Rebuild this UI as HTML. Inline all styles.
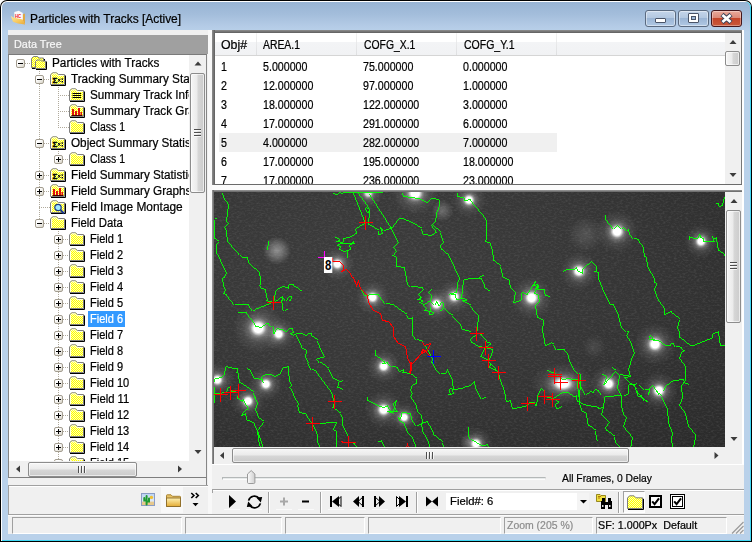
<!DOCTYPE html>
<html><head><meta charset="utf-8"><title>Particles with Tracks [Active]</title>
<style>
html,body{margin:0;padding:0;background:#fff;}
body{width:752px;height:542px;overflow:hidden;position:relative;font-family:"Liberation Sans",sans-serif;}
#win{position:absolute;left:0;top:0;width:752px;height:542px;overflow:hidden;}
.b{position:absolute;box-sizing:border-box;}
.t{position:absolute;white-space:pre;transform-origin:0 50%;display:block;-webkit-text-stroke:0.22px currentColor;}
svg{position:absolute;overflow:visible;}
.clip{position:absolute;overflow:hidden;}
</style></head><body><div id="win">
<div class="b" style="left:0;top:0;width:752px;height:542px;background:#000;border-radius:7px 7px 0 0;"></div>
<div class="b" style="left:1px;top:1px;width:750px;height:540px;background:#fff;border-radius:6px 6px 0 0;"></div>
<div class="b" style="left:300px;top:2px;width:451px;height:539px;background:#3fd8f4;border-radius:0 5px 0 0;"></div>
<div class="b" style="left:2px;top:300px;width:749px;height:241px;background:#3fd8f4;"></div>
<div class="b" style="left:2px;top:2px;width:748px;height:538px;border-radius:5px 5px 0 0;background:linear-gradient(#98b4d4 0px,#a3bddb 12px,#b4cbe6 24px,#b9d1ea 30px,#b9d1ea 100%);"></div>
<div class="b" style="left:8px;top:30px;width:736px;height:504px;background:#f0f0f0;"></div>
<svg style="left:10px;top:10px" width="18" height="16" viewBox="0 0 18 16">
<defs><linearGradient id="fg" x1="0" y1="0" x2="1" y2="1"><stop offset="0" stop-color="#ffe79a"/><stop offset="0.6" stop-color="#f6c65a"/><stop offset="1" stop-color="#e7a83c"/></linearGradient></defs>
<path d="M12.6 4.4 L14.9 3.6 L15 14.6 L12.4 10 Z" fill="#e3a73e"/>
<path d="M4.3 2 L8.8 0.8 L12.8 3 L12.8 11 L4.3 9 Z" fill="#fbfbfb"/>
<text x="4.9" y="7.6" font-family="Liberation Sans,sans-serif" font-weight="bold" font-size="4.9" fill="#f01818" textLength="6.2" lengthAdjust="spacingAndGlyphs">HC</text>
<path d="M0.8 6.1 L3.4 7.4 L12.6 9.6 L15 14.6 L8 13.6 L3 11.8 L1.9 9 Z" fill="url(#fg)"/>
</svg>
<span id="title" class="t" style="left:30px;top:10.5px;height:16px;line-height:16px;font-size:12px;color:#000;font-weight:normal;transform:scaleX(0.9934);">Particles with Tracks [Active]</span>
<div class="b" style="left:645px;top:10px;width:31px;height:17px;border:1px solid #5a6a80;border-radius:3px;background:linear-gradient(#c4d5ea 0%,#b3c8e1 45%,#9bb5d5 50%,#b0c8e4 100%);box-shadow:inset 0 0 0 1px rgba(255,255,255,.45);"></div>
<div class="b" style="left:655px;top:18px;width:11px;height:5px;background:#fff;border:1px solid #4a5468;border-radius:1px;"></div>
<div class="b" style="left:678px;top:10px;width:31px;height:17px;border:1px solid #5a6a80;border-radius:3px;background:linear-gradient(#c4d5ea 0%,#b3c8e1 45%,#9bb5d5 50%,#b0c8e4 100%);box-shadow:inset 0 0 0 1px rgba(255,255,255,.45);"></div>
<div class="b" style="left:688px;top:13px;width:11px;height:10px;background:#fff;border:1px solid #4a5468;border-radius:1px;"></div>
<div class="b" style="left:691px;top:16px;width:5px;height:4px;background:#9db7d6;border:1px solid #4a5468;"></div>
<div class="b" style="left:711px;top:10px;width:31px;height:17px;border:1px solid #43161c;border-radius:3px;background:linear-gradient(#e9a99b 0%,#dc8a79 45%,#c4452a 50%,#c8583a 100%);box-shadow:inset 0 0 0 1px rgba(255,255,255,.35);"></div>
<svg style="left:719px;top:12px" width="15" height="13" viewBox="0 0 15 13"><path d="M3 2.5 L12 10.5 M12 2.5 L3 10.5" stroke="#3f4458" stroke-width="4.6" stroke-linecap="butt" fill="none"/><path d="M3.4 2.9 L11.6 10.1 M11.6 2.9 L3.4 10.1" stroke="#fff" stroke-width="2.7" stroke-linecap="butt" fill="none"/></svg>
<div class="b" style="left:8px;top:35px;width:200px;height:19px;background:#a0a0a0;"></div>
<span id="datatree" class="t" style="left:13.6px;top:36.8px;height:15px;line-height:15px;font-size:11px;color:#f6f6f6;font-weight:normal;transform:scaleX(0.9875);">Data Tree</span>
<div class="b" style="left:8px;top:54px;width:199px;height:424px;background:#fff;border:1px solid #868686;border-top-color:#7a7a7a;border-bottom-color:#7e7e7e;"></div>
<div class="b" style="left:206px;top:478px;width:1px;height:37px;background:#868686;"></div>
<div class="b" style="left:189px;top:55px;width:17px;height:406px;background:#f0f0f0;"></div>
<svg style="left:0;top:0" width="752" height="542"><polygon points="194.5,65.5 198,61.5 201.5,65.5" fill="#3c3c3c"/></svg>
<svg style="left:0;top:0" width="752" height="542"><polygon points="194.5,450 198,454 201.5,450" fill="#3c3c3c"/></svg>
<div class="b" style="left:190px;top:73px;width:15px;height:120px;border:1px solid #8c8c8c;border-radius:2px;background:linear-gradient(90deg,#f6f6f6 0%,#ebebeb 45%,#d6d6d6 55%,#cbcbcb 100%);box-shadow:inset 0 0 0 1px rgba(255,255,255,.6);"></div>
<div class="b" style="left:194px;top:129px;width:7px;height:1px;background:#4f4f4f;"></div>
<div class="b" style="left:194px;top:130px;width:7px;height:1px;background:rgba(255,255,255,.75);"></div>
<div class="b" style="left:194px;top:132px;width:7px;height:1px;background:#4f4f4f;"></div>
<div class="b" style="left:194px;top:133px;width:7px;height:1px;background:rgba(255,255,255,.75);"></div>
<div class="b" style="left:194px;top:135px;width:7px;height:1px;background:#4f4f4f;"></div>
<div class="b" style="left:194px;top:136px;width:7px;height:1px;background:rgba(255,255,255,.75);"></div>
<div class="b" style="left:9px;top:461px;width:197px;height:16px;background:#f0f0f0;"></div>
<svg style="left:0;top:0" width="752" height="542"><polygon points="20,465.5 16,469 20,472.5" fill="#3c3c3c"/></svg>
<svg style="left:0;top:0" width="752" height="542"><polygon points="178,465.5 182,469 178,472.5" fill="#3c3c3c"/></svg>
<div class="b" style="left:28px;top:462px;width:109px;height:15px;border:1px solid #8c8c8c;border-radius:2px;background:linear-gradient(#f6f6f6 0%,#ebebeb 45%,#d6d6d6 55%,#cbcbcb 100%);box-shadow:inset 0 0 0 1px rgba(255,255,255,.6);"></div>
<div class="b" style="left:78px;top:466px;width:1px;height:7px;background:#4f4f4f;"></div>
<div class="b" style="left:79px;top:466px;width:1px;height:7px;background:rgba(255,255,255,.75);"></div>
<div class="b" style="left:81px;top:466px;width:1px;height:7px;background:#4f4f4f;"></div>
<div class="b" style="left:82px;top:466px;width:1px;height:7px;background:rgba(255,255,255,.75);"></div>
<div class="b" style="left:84px;top:466px;width:1px;height:7px;background:#4f4f4f;"></div>
<div class="b" style="left:85px;top:466px;width:1px;height:7px;background:rgba(255,255,255,.75);"></div>
<div class="clip" style="left:9px;top:55px;width:180px;height:406px;">
<svg width="0" height="0" style="left:0;top:0"><defs>
<pattern id="dith" width="2" height="2" patternUnits="userSpaceOnUse"><rect width="2" height="2" fill="#ffff00"/><rect x="0" y="0" width="1" height="1" fill="#ffffb4"/><rect x="1" y="1" width="1" height="1" fill="#ffffb4"/></pattern>
</defs></svg>
<div class="b" style="left:16px;top:8px;width:6px;height:1px;background:repeating-linear-gradient(90deg,#b0aa9c 0 1px,transparent 1px 2px);"></div>
<svg style="left:22px;top:1px" width="16" height="14" viewBox="0 0 16 14"><path d="M0.5 11.5 V2.5 L2.5 0.5 H6.5 L8 2 H12.5 V11.5 Z" fill="url(#dith)" stroke="#808080"/><path d="M1 12.5 H13.5 V3" fill="none" stroke="#000"/><path d="M4.5 12.5 V5.5 L6 4 H9.5 L10.5 5 H14.5 V12.5 Z" fill="url(#dith)" stroke="#808080"/><path d="M5 13.5 H15.5 V5.5" fill="none" stroke="#000"/></svg>
<div class="b" style="left:7px;top:4px;width:9px;height:9px;border:1px solid #a39d90;border-radius:2px;background:linear-gradient(135deg,#fff 30%,#d8d4c8 100%);"></div>
<div class="b" style="left:9px;top:8px;width:5px;height:1px;background:#000;"></div>
<span id="tree0" class="t" style="left:43px;top:0.0px;height:16px;line-height:16px;font-size:12px;color:#000;font-weight:normal;transform:scaleX(0.9817);">Particles with Tracks</span>
<div class="b" style="left:35px;top:24px;width:6px;height:1px;background:repeating-linear-gradient(90deg,#b0aa9c 0 1px,transparent 1px 2px);"></div>
<svg style="left:41px;top:17px" width="16" height="14" viewBox="0 0 16 14"><path d="M0.5 12.5 V3 L2.5 0.8 H6.5 L8.5 2.5 H14.5 V12.5 Z" fill="url(#dith)" stroke="#808080"/><path d="M1 13.5 H15.5 V3.5" fill="none" stroke="#000"/><path d="M1.5 12 V3.4 L2.9 1.8 H6.1 L8.1 3.5 H13.5" fill="none" stroke="#fff" stroke-opacity="0.85"/><text x="2.4" y="10.6" font-family="Liberation Sans,sans-serif" font-size="7.8" font-weight="bold" fill="#000" stroke="#000" stroke-width="0.45">Σ</text><path d="M8 6.8 L10.4 9.8 M10.400 6.8 L8 9.8" stroke="#000" stroke-width="1"/><rect x="11.6" y="6.4" width="1.4" height="1.4" fill="#000"/><rect x="11.6" y="9" width="1.4" height="1.4" fill="#000"/></svg>
<div class="b" style="left:26px;top:20px;width:9px;height:9px;border:1px solid #a39d90;border-radius:2px;background:linear-gradient(135deg,#fff 30%,#d8d4c8 100%);"></div>
<div class="b" style="left:28px;top:24px;width:5px;height:1px;background:#000;"></div>
<span id="tree1" class="t" style="left:62px;top:16.0px;height:16px;line-height:16px;font-size:12px;color:#000;font-weight:normal;transform:scaleX(0.9763);">Tracking Summary Statistics</span>
<div class="b" style="left:49px;top:40px;width:11px;height:1px;background:repeating-linear-gradient(90deg,#b0aa9c 0 1px,transparent 1px 2px);"></div>
<svg style="left:60px;top:33px" width="16" height="14" viewBox="0 0 16 14"><path d="M0.5 12.5 V3 L2.5 0.8 H6.5 L8.5 2.5 H14.5 V12.5 Z" fill="url(#dith)" stroke="#808080"/><path d="M1 13.5 H15.5 V3.5" fill="none" stroke="#000"/><path d="M1.5 12 V3.4 L2.9 1.8 H6.1 L8.1 3.5 H13.5" fill="none" stroke="#fff" stroke-opacity="0.85"/><path d="M3.5 5.5 H12 M3.5 7.5 H12 M3.5 9.5 H12" stroke="#000" stroke-width="1"/></svg>
<span id="tree2" class="t" style="left:81px;top:32.0px;height:16px;line-height:16px;font-size:12px;color:#000;font-weight:normal;transform:scaleX(0.9763);">Summary Track Info</span>
<div class="b" style="left:49px;top:56px;width:11px;height:1px;background:repeating-linear-gradient(90deg,#b0aa9c 0 1px,transparent 1px 2px);"></div>
<svg style="left:60px;top:49px" width="16" height="14" viewBox="0 0 16 14"><path d="M0.5 12.5 V3 L2.5 0.8 H6.5 L8.5 2.5 H14.5 V12.5 Z" fill="url(#dith)" stroke="#808080"/><path d="M1 13.5 H15.5 V3.5" fill="none" stroke="#000"/><path d="M1.5 12 V3.4 L2.9 1.8 H6.1 L8.1 3.5 H13.5" fill="none" stroke="#fff" stroke-opacity="0.85"/><rect x="3" y="5" width="2" height="6" fill="#e01010"/><rect x="6" y="7" width="2" height="4" fill="#e01010"/><rect x="9" y="4" width="2" height="7" fill="#e01010"/><rect x="11.5" y="8" width="1.5" height="3" fill="#e01010"/><path d="M2.5 11.5 H13.5" stroke="#400"/></svg>
<span id="tree3" class="t" style="left:81px;top:48.0px;height:16px;line-height:16px;font-size:12px;color:#000;font-weight:normal;transform:scaleX(0.9763);">Summary Track Graphs</span>
<div class="b" style="left:49px;top:72px;width:11px;height:1px;background:repeating-linear-gradient(90deg,#b0aa9c 0 1px,transparent 1px 2px);"></div>
<svg style="left:60px;top:65px" width="16" height="14" viewBox="0 0 16 14"><path d="M0.5 12.5 V3 L2.5 0.8 H6.5 L8.5 2.5 H14.5 V12.5 Z" fill="url(#dith)" stroke="#808080"/><path d="M1 13.5 H15.5 V3.5" fill="none" stroke="#000"/><path d="M1.5 12 V3.4 L2.9 1.8 H6.1 L8.1 3.5 H13.5" fill="none" stroke="#fff" stroke-opacity="0.85"/></svg>
<span id="tree4" class="t" style="left:81px;top:64.0px;height:16px;line-height:16px;font-size:12px;color:#000;font-weight:normal;transform:scaleX(0.8750);">Class 1</span>
<div class="b" style="left:35px;top:88px;width:6px;height:1px;background:repeating-linear-gradient(90deg,#b0aa9c 0 1px,transparent 1px 2px);"></div>
<svg style="left:41px;top:81px" width="16" height="14" viewBox="0 0 16 14"><path d="M0.5 12.5 V3 L2.5 0.8 H6.5 L8.5 2.5 H14.5 V12.5 Z" fill="url(#dith)" stroke="#808080"/><path d="M1 13.5 H15.5 V3.5" fill="none" stroke="#000"/><path d="M1.5 12 V3.4 L2.9 1.8 H6.1 L8.1 3.5 H13.5" fill="none" stroke="#fff" stroke-opacity="0.85"/><text x="2.4" y="10.6" font-family="Liberation Sans,sans-serif" font-size="7.8" font-weight="bold" fill="#000" stroke="#000" stroke-width="0.45">Σ</text><path d="M8 6.8 L10.4 9.8 M10.400 6.8 L8 9.8" stroke="#000" stroke-width="1"/><rect x="11.6" y="6.4" width="1.4" height="1.4" fill="#000"/><rect x="11.6" y="9" width="1.4" height="1.4" fill="#000"/></svg>
<div class="b" style="left:26px;top:84px;width:9px;height:9px;border:1px solid #a39d90;border-radius:2px;background:linear-gradient(135deg,#fff 30%,#d8d4c8 100%);"></div>
<div class="b" style="left:28px;top:88px;width:5px;height:1px;background:#000;"></div>
<span id="tree5" class="t" style="left:62px;top:80.0px;height:16px;line-height:16px;font-size:12px;color:#000;font-weight:normal;transform:scaleX(0.9763);">Object Summary Statistics</span>
<div class="b" style="left:54px;top:104px;width:6px;height:1px;background:repeating-linear-gradient(90deg,#b0aa9c 0 1px,transparent 1px 2px);"></div>
<svg style="left:60px;top:97px" width="16" height="14" viewBox="0 0 16 14"><path d="M0.5 12.5 V3 L2.5 0.8 H6.5 L8.5 2.5 H14.5 V12.5 Z" fill="url(#dith)" stroke="#808080"/><path d="M1 13.5 H15.5 V3.5" fill="none" stroke="#000"/><path d="M1.5 12 V3.4 L2.9 1.8 H6.1 L8.1 3.5 H13.5" fill="none" stroke="#fff" stroke-opacity="0.85"/></svg>
<div class="b" style="left:45px;top:100px;width:9px;height:9px;border:1px solid #a39d90;border-radius:2px;background:linear-gradient(135deg,#fff 30%,#d8d4c8 100%);"></div>
<div class="b" style="left:47px;top:104px;width:5px;height:1px;background:#000;"></div>
<div class="b" style="left:49px;top:102px;width:1px;height:5px;background:#000;"></div>
<span id="tree6" class="t" style="left:81px;top:96.0px;height:16px;line-height:16px;font-size:12px;color:#000;font-weight:normal;transform:scaleX(0.8750);">Class 1</span>
<div class="b" style="left:35px;top:120px;width:6px;height:1px;background:repeating-linear-gradient(90deg,#b0aa9c 0 1px,transparent 1px 2px);"></div>
<svg style="left:41px;top:113px" width="16" height="14" viewBox="0 0 16 14"><path d="M0.5 12.5 V3 L2.5 0.8 H6.5 L8.5 2.5 H14.5 V12.5 Z" fill="url(#dith)" stroke="#808080"/><path d="M1 13.5 H15.5 V3.5" fill="none" stroke="#000"/><path d="M1.5 12 V3.4 L2.9 1.8 H6.1 L8.1 3.5 H13.5" fill="none" stroke="#fff" stroke-opacity="0.85"/><text x="2.4" y="10.6" font-family="Liberation Sans,sans-serif" font-size="7.8" font-weight="bold" fill="#000" stroke="#000" stroke-width="0.45">Σ</text><path d="M8 6.8 L10.4 9.8 M10.400 6.8 L8 9.8" stroke="#000" stroke-width="1"/><rect x="11.6" y="6.4" width="1.4" height="1.4" fill="#000"/><rect x="11.6" y="9" width="1.4" height="1.4" fill="#000"/></svg>
<div class="b" style="left:26px;top:116px;width:9px;height:9px;border:1px solid #a39d90;border-radius:2px;background:linear-gradient(135deg,#fff 30%,#d8d4c8 100%);"></div>
<div class="b" style="left:28px;top:120px;width:5px;height:1px;background:#000;"></div>
<div class="b" style="left:30px;top:118px;width:1px;height:5px;background:#000;"></div>
<span id="tree7" class="t" style="left:62px;top:112.0px;height:16px;line-height:16px;font-size:12px;color:#000;font-weight:normal;transform:scaleX(0.9763);">Field Summary Statistics</span>
<div class="b" style="left:35px;top:136px;width:6px;height:1px;background:repeating-linear-gradient(90deg,#b0aa9c 0 1px,transparent 1px 2px);"></div>
<svg style="left:41px;top:129px" width="16" height="14" viewBox="0 0 16 14"><path d="M0.5 12.5 V3 L2.5 0.8 H6.5 L8.5 2.5 H14.5 V12.5 Z" fill="url(#dith)" stroke="#808080"/><path d="M1 13.5 H15.5 V3.5" fill="none" stroke="#000"/><path d="M1.5 12 V3.4 L2.9 1.8 H6.1 L8.1 3.5 H13.5" fill="none" stroke="#fff" stroke-opacity="0.85"/><rect x="3" y="5" width="2" height="6" fill="#e01010"/><rect x="6" y="7" width="2" height="4" fill="#e01010"/><rect x="9" y="4" width="2" height="7" fill="#e01010"/><rect x="11.5" y="8" width="1.5" height="3" fill="#e01010"/><path d="M2.5 11.5 H13.5" stroke="#400"/></svg>
<div class="b" style="left:26px;top:132px;width:9px;height:9px;border:1px solid #a39d90;border-radius:2px;background:linear-gradient(135deg,#fff 30%,#d8d4c8 100%);"></div>
<div class="b" style="left:28px;top:136px;width:5px;height:1px;background:#000;"></div>
<div class="b" style="left:30px;top:134px;width:1px;height:5px;background:#000;"></div>
<span id="tree8" class="t" style="left:62px;top:128.0px;height:16px;line-height:16px;font-size:12px;color:#000;font-weight:normal;transform:scaleX(0.9763);">Field Summary Graphs</span>
<div class="b" style="left:30px;top:152px;width:11px;height:1px;background:repeating-linear-gradient(90deg,#b0aa9c 0 1px,transparent 1px 2px);"></div>
<svg style="left:41px;top:145px" width="16" height="14" viewBox="0 0 16 14"><path d="M0.5 12.5 V3 L2.5 0.8 H6.5 L8.5 2.5 H14.5 V12.5 Z" fill="url(#dith)" stroke="#808080"/><path d="M1 13.5 H15.5 V3.5" fill="none" stroke="#000"/><path d="M1.5 12 V3.4 L2.9 1.8 H6.1 L8.1 3.5 H13.5" fill="none" stroke="#fff" stroke-opacity="0.85"/><circle cx="8" cy="7.5" r="3.2" fill="#9fe8ff" stroke="#1a3a8a" stroke-width="1.2"/><path d="M10.5 10 L14 13.5" stroke="#1a3a8a" stroke-width="2"/></svg>
<span id="tree9" class="t" style="left:62px;top:144.0px;height:16px;line-height:16px;font-size:12px;color:#000;font-weight:normal;transform:scaleX(0.9912);">Field Image Montage</span>
<div class="b" style="left:35px;top:168px;width:6px;height:1px;background:repeating-linear-gradient(90deg,#b0aa9c 0 1px,transparent 1px 2px);"></div>
<svg style="left:41px;top:161px" width="16" height="14" viewBox="0 0 16 14"><path d="M0.5 12.5 V3 L2.5 0.8 H6.5 L8.5 2.5 H14.5 V12.5 Z" fill="url(#dith)" stroke="#808080"/><path d="M1 13.5 H15.5 V3.5" fill="none" stroke="#000"/><path d="M1.5 12 V3.4 L2.9 1.8 H6.1 L8.1 3.5 H13.5" fill="none" stroke="#fff" stroke-opacity="0.85"/></svg>
<div class="b" style="left:26px;top:164px;width:9px;height:9px;border:1px solid #a39d90;border-radius:2px;background:linear-gradient(135deg,#fff 30%,#d8d4c8 100%);"></div>
<div class="b" style="left:28px;top:168px;width:5px;height:1px;background:#000;"></div>
<span id="tree10" class="t" style="left:62px;top:160.0px;height:16px;line-height:16px;font-size:12px;color:#000;font-weight:normal;transform:scaleX(0.9455);">Field Data</span>
<div class="b" style="left:54px;top:184px;width:6px;height:1px;background:repeating-linear-gradient(90deg,#b0aa9c 0 1px,transparent 1px 2px);"></div>
<svg style="left:60px;top:177px" width="16" height="14" viewBox="0 0 16 14"><path d="M0.5 12.5 V3 L2.5 0.8 H6.5 L8.5 2.5 H14.5 V12.5 Z" fill="url(#dith)" stroke="#808080"/><path d="M1 13.5 H15.5 V3.5" fill="none" stroke="#000"/><path d="M1.5 12 V3.4 L2.9 1.8 H6.1 L8.1 3.5 H13.5" fill="none" stroke="#fff" stroke-opacity="0.85"/></svg>
<div class="b" style="left:45px;top:180px;width:9px;height:9px;border:1px solid #a39d90;border-radius:2px;background:linear-gradient(135deg,#fff 30%,#d8d4c8 100%);"></div>
<div class="b" style="left:47px;top:184px;width:5px;height:1px;background:#000;"></div>
<div class="b" style="left:49px;top:182px;width:1px;height:5px;background:#000;"></div>
<span id="tree11" class="t" style="left:81px;top:176.0px;height:16px;line-height:16px;font-size:12px;color:#000;font-weight:normal;transform:scaleX(0.9167);">Field 1</span>
<div class="b" style="left:54px;top:200px;width:6px;height:1px;background:repeating-linear-gradient(90deg,#b0aa9c 0 1px,transparent 1px 2px);"></div>
<svg style="left:60px;top:193px" width="16" height="14" viewBox="0 0 16 14"><path d="M0.5 12.5 V3 L2.5 0.8 H6.5 L8.5 2.5 H14.5 V12.5 Z" fill="url(#dith)" stroke="#808080"/><path d="M1 13.5 H15.5 V3.5" fill="none" stroke="#000"/><path d="M1.5 12 V3.4 L2.9 1.8 H6.1 L8.1 3.5 H13.5" fill="none" stroke="#fff" stroke-opacity="0.85"/></svg>
<div class="b" style="left:45px;top:196px;width:9px;height:9px;border:1px solid #a39d90;border-radius:2px;background:linear-gradient(135deg,#fff 30%,#d8d4c8 100%);"></div>
<div class="b" style="left:47px;top:200px;width:5px;height:1px;background:#000;"></div>
<div class="b" style="left:49px;top:198px;width:1px;height:5px;background:#000;"></div>
<span id="tree12" class="t" style="left:81px;top:192.0px;height:16px;line-height:16px;font-size:12px;color:#000;font-weight:normal;transform:scaleX(0.9167);">Field 2</span>
<div class="b" style="left:54px;top:216px;width:6px;height:1px;background:repeating-linear-gradient(90deg,#b0aa9c 0 1px,transparent 1px 2px);"></div>
<svg style="left:60px;top:209px" width="16" height="14" viewBox="0 0 16 14"><path d="M0.5 12.5 V3 L2.5 0.8 H6.5 L8.5 2.5 H14.5 V12.5 Z" fill="url(#dith)" stroke="#808080"/><path d="M1 13.5 H15.5 V3.5" fill="none" stroke="#000"/><path d="M1.5 12 V3.4 L2.9 1.8 H6.1 L8.1 3.5 H13.5" fill="none" stroke="#fff" stroke-opacity="0.85"/></svg>
<div class="b" style="left:45px;top:212px;width:9px;height:9px;border:1px solid #a39d90;border-radius:2px;background:linear-gradient(135deg,#fff 30%,#d8d4c8 100%);"></div>
<div class="b" style="left:47px;top:216px;width:5px;height:1px;background:#000;"></div>
<div class="b" style="left:49px;top:214px;width:1px;height:5px;background:#000;"></div>
<span id="tree13" class="t" style="left:81px;top:208.0px;height:16px;line-height:16px;font-size:12px;color:#000;font-weight:normal;transform:scaleX(0.9167);">Field 3</span>
<div class="b" style="left:54px;top:232px;width:6px;height:1px;background:repeating-linear-gradient(90deg,#b0aa9c 0 1px,transparent 1px 2px);"></div>
<svg style="left:60px;top:225px" width="16" height="14" viewBox="0 0 16 14"><path d="M0.5 12.5 V3 L2.5 0.8 H6.5 L8.5 2.5 H14.5 V12.5 Z" fill="url(#dith)" stroke="#808080"/><path d="M1 13.5 H15.5 V3.5" fill="none" stroke="#000"/><path d="M1.5 12 V3.4 L2.9 1.8 H6.1 L8.1 3.5 H13.5" fill="none" stroke="#fff" stroke-opacity="0.85"/></svg>
<div class="b" style="left:45px;top:228px;width:9px;height:9px;border:1px solid #a39d90;border-radius:2px;background:linear-gradient(135deg,#fff 30%,#d8d4c8 100%);"></div>
<div class="b" style="left:47px;top:232px;width:5px;height:1px;background:#000;"></div>
<div class="b" style="left:49px;top:230px;width:1px;height:5px;background:#000;"></div>
<span id="tree14" class="t" style="left:81px;top:224.0px;height:16px;line-height:16px;font-size:12px;color:#000;font-weight:normal;transform:scaleX(0.9167);">Field 4</span>
<div class="b" style="left:54px;top:248px;width:6px;height:1px;background:repeating-linear-gradient(90deg,#b0aa9c 0 1px,transparent 1px 2px);"></div>
<svg style="left:60px;top:241px" width="16" height="14" viewBox="0 0 16 14"><path d="M0.5 12.5 V3 L2.5 0.8 H6.5 L8.5 2.5 H14.5 V12.5 Z" fill="url(#dith)" stroke="#808080"/><path d="M1 13.5 H15.5 V3.5" fill="none" stroke="#000"/><path d="M1.5 12 V3.4 L2.9 1.8 H6.1 L8.1 3.5 H13.5" fill="none" stroke="#fff" stroke-opacity="0.85"/></svg>
<div class="b" style="left:45px;top:244px;width:9px;height:9px;border:1px solid #a39d90;border-radius:2px;background:linear-gradient(135deg,#fff 30%,#d8d4c8 100%);"></div>
<div class="b" style="left:47px;top:248px;width:5px;height:1px;background:#000;"></div>
<div class="b" style="left:49px;top:246px;width:1px;height:5px;background:#000;"></div>
<span id="tree15" class="t" style="left:81px;top:240.0px;height:16px;line-height:16px;font-size:12px;color:#000;font-weight:normal;transform:scaleX(0.9167);">Field 5</span>
<div class="b" style="left:54px;top:264px;width:6px;height:1px;background:repeating-linear-gradient(90deg,#b0aa9c 0 1px,transparent 1px 2px);"></div>
<div class="b" style="left:79px;top:256px;width:37px;height:16px;background:#3399ff;"></div>
<svg style="left:60px;top:257px" width="16" height="14" viewBox="0 0 16 14"><path d="M0.5 12.5 V3 L2.5 0.8 H6.5 L8.5 2.5 H14.5 V12.5 Z" fill="url(#dith)" stroke="#808080"/><path d="M1 13.5 H15.5 V3.5" fill="none" stroke="#000"/><path d="M1.5 12 V3.4 L2.9 1.8 H6.1 L8.1 3.5 H13.5" fill="none" stroke="#fff" stroke-opacity="0.85"/></svg>
<div class="b" style="left:45px;top:260px;width:9px;height:9px;border:1px solid #a39d90;border-radius:2px;background:linear-gradient(135deg,#fff 30%,#d8d4c8 100%);"></div>
<div class="b" style="left:47px;top:264px;width:5px;height:1px;background:#000;"></div>
<div class="b" style="left:49px;top:262px;width:1px;height:5px;background:#000;"></div>
<span id="tree16" class="t" style="left:81px;top:256.0px;height:16px;line-height:16px;font-size:12px;color:#fff;font-weight:normal;transform:scaleX(0.9167);">Field 6</span>
<div class="b" style="left:54px;top:280px;width:6px;height:1px;background:repeating-linear-gradient(90deg,#b0aa9c 0 1px,transparent 1px 2px);"></div>
<svg style="left:60px;top:273px" width="16" height="14" viewBox="0 0 16 14"><path d="M0.5 12.5 V3 L2.5 0.8 H6.5 L8.5 2.5 H14.5 V12.5 Z" fill="url(#dith)" stroke="#808080"/><path d="M1 13.5 H15.5 V3.5" fill="none" stroke="#000"/><path d="M1.5 12 V3.4 L2.9 1.8 H6.1 L8.1 3.5 H13.5" fill="none" stroke="#fff" stroke-opacity="0.85"/></svg>
<div class="b" style="left:45px;top:276px;width:9px;height:9px;border:1px solid #a39d90;border-radius:2px;background:linear-gradient(135deg,#fff 30%,#d8d4c8 100%);"></div>
<div class="b" style="left:47px;top:280px;width:5px;height:1px;background:#000;"></div>
<div class="b" style="left:49px;top:278px;width:1px;height:5px;background:#000;"></div>
<span id="tree17" class="t" style="left:81px;top:272.0px;height:16px;line-height:16px;font-size:12px;color:#000;font-weight:normal;transform:scaleX(0.9167);">Field 7</span>
<div class="b" style="left:54px;top:296px;width:6px;height:1px;background:repeating-linear-gradient(90deg,#b0aa9c 0 1px,transparent 1px 2px);"></div>
<svg style="left:60px;top:289px" width="16" height="14" viewBox="0 0 16 14"><path d="M0.5 12.5 V3 L2.5 0.8 H6.5 L8.5 2.5 H14.5 V12.5 Z" fill="url(#dith)" stroke="#808080"/><path d="M1 13.5 H15.5 V3.5" fill="none" stroke="#000"/><path d="M1.5 12 V3.4 L2.9 1.8 H6.1 L8.1 3.5 H13.5" fill="none" stroke="#fff" stroke-opacity="0.85"/></svg>
<div class="b" style="left:45px;top:292px;width:9px;height:9px;border:1px solid #a39d90;border-radius:2px;background:linear-gradient(135deg,#fff 30%,#d8d4c8 100%);"></div>
<div class="b" style="left:47px;top:296px;width:5px;height:1px;background:#000;"></div>
<div class="b" style="left:49px;top:294px;width:1px;height:5px;background:#000;"></div>
<span id="tree18" class="t" style="left:81px;top:288.0px;height:16px;line-height:16px;font-size:12px;color:#000;font-weight:normal;transform:scaleX(0.9167);">Field 8</span>
<div class="b" style="left:54px;top:312px;width:6px;height:1px;background:repeating-linear-gradient(90deg,#b0aa9c 0 1px,transparent 1px 2px);"></div>
<svg style="left:60px;top:305px" width="16" height="14" viewBox="0 0 16 14"><path d="M0.5 12.5 V3 L2.5 0.8 H6.5 L8.5 2.5 H14.5 V12.5 Z" fill="url(#dith)" stroke="#808080"/><path d="M1 13.5 H15.5 V3.5" fill="none" stroke="#000"/><path d="M1.5 12 V3.4 L2.9 1.8 H6.1 L8.1 3.5 H13.5" fill="none" stroke="#fff" stroke-opacity="0.85"/></svg>
<div class="b" style="left:45px;top:308px;width:9px;height:9px;border:1px solid #a39d90;border-radius:2px;background:linear-gradient(135deg,#fff 30%,#d8d4c8 100%);"></div>
<div class="b" style="left:47px;top:312px;width:5px;height:1px;background:#000;"></div>
<div class="b" style="left:49px;top:310px;width:1px;height:5px;background:#000;"></div>
<span id="tree19" class="t" style="left:81px;top:304.0px;height:16px;line-height:16px;font-size:12px;color:#000;font-weight:normal;transform:scaleX(0.9167);">Field 9</span>
<div class="b" style="left:54px;top:328px;width:6px;height:1px;background:repeating-linear-gradient(90deg,#b0aa9c 0 1px,transparent 1px 2px);"></div>
<svg style="left:60px;top:321px" width="16" height="14" viewBox="0 0 16 14"><path d="M0.5 12.5 V3 L2.5 0.8 H6.5 L8.5 2.5 H14.5 V12.5 Z" fill="url(#dith)" stroke="#808080"/><path d="M1 13.5 H15.5 V3.5" fill="none" stroke="#000"/><path d="M1.5 12 V3.4 L2.9 1.8 H6.1 L8.1 3.5 H13.5" fill="none" stroke="#fff" stroke-opacity="0.85"/></svg>
<div class="b" style="left:45px;top:324px;width:9px;height:9px;border:1px solid #a39d90;border-radius:2px;background:linear-gradient(135deg,#fff 30%,#d8d4c8 100%);"></div>
<div class="b" style="left:47px;top:328px;width:5px;height:1px;background:#000;"></div>
<div class="b" style="left:49px;top:326px;width:1px;height:5px;background:#000;"></div>
<span id="tree20" class="t" style="left:81px;top:320.0px;height:16px;line-height:16px;font-size:12px;color:#000;font-weight:normal;transform:scaleX(0.9186);">Field 10</span>
<div class="b" style="left:54px;top:344px;width:6px;height:1px;background:repeating-linear-gradient(90deg,#b0aa9c 0 1px,transparent 1px 2px);"></div>
<svg style="left:60px;top:337px" width="16" height="14" viewBox="0 0 16 14"><path d="M0.5 12.5 V3 L2.5 0.8 H6.5 L8.5 2.5 H14.5 V12.5 Z" fill="url(#dith)" stroke="#808080"/><path d="M1 13.5 H15.5 V3.5" fill="none" stroke="#000"/><path d="M1.5 12 V3.4 L2.9 1.8 H6.1 L8.1 3.5 H13.5" fill="none" stroke="#fff" stroke-opacity="0.85"/></svg>
<div class="b" style="left:45px;top:340px;width:9px;height:9px;border:1px solid #a39d90;border-radius:2px;background:linear-gradient(135deg,#fff 30%,#d8d4c8 100%);"></div>
<div class="b" style="left:47px;top:344px;width:5px;height:1px;background:#000;"></div>
<div class="b" style="left:49px;top:342px;width:1px;height:5px;background:#000;"></div>
<span id="tree21" class="t" style="left:81px;top:336.0px;height:16px;line-height:16px;font-size:12px;color:#000;font-weight:normal;transform:scaleX(0.9405);">Field 11</span>
<div class="b" style="left:54px;top:360px;width:6px;height:1px;background:repeating-linear-gradient(90deg,#b0aa9c 0 1px,transparent 1px 2px);"></div>
<svg style="left:60px;top:353px" width="16" height="14" viewBox="0 0 16 14"><path d="M0.5 12.5 V3 L2.5 0.8 H6.5 L8.5 2.5 H14.5 V12.5 Z" fill="url(#dith)" stroke="#808080"/><path d="M1 13.5 H15.5 V3.5" fill="none" stroke="#000"/><path d="M1.5 12 V3.4 L2.9 1.8 H6.1 L8.1 3.5 H13.5" fill="none" stroke="#fff" stroke-opacity="0.85"/></svg>
<div class="b" style="left:45px;top:356px;width:9px;height:9px;border:1px solid #a39d90;border-radius:2px;background:linear-gradient(135deg,#fff 30%,#d8d4c8 100%);"></div>
<div class="b" style="left:47px;top:360px;width:5px;height:1px;background:#000;"></div>
<div class="b" style="left:49px;top:358px;width:1px;height:5px;background:#000;"></div>
<span id="tree22" class="t" style="left:81px;top:352.0px;height:16px;line-height:16px;font-size:12px;color:#000;font-weight:normal;transform:scaleX(0.9186);">Field 12</span>
<div class="b" style="left:54px;top:376px;width:6px;height:1px;background:repeating-linear-gradient(90deg,#b0aa9c 0 1px,transparent 1px 2px);"></div>
<svg style="left:60px;top:369px" width="16" height="14" viewBox="0 0 16 14"><path d="M0.5 12.5 V3 L2.5 0.8 H6.5 L8.5 2.5 H14.5 V12.5 Z" fill="url(#dith)" stroke="#808080"/><path d="M1 13.5 H15.5 V3.5" fill="none" stroke="#000"/><path d="M1.5 12 V3.4 L2.9 1.8 H6.1 L8.1 3.5 H13.5" fill="none" stroke="#fff" stroke-opacity="0.85"/></svg>
<div class="b" style="left:45px;top:372px;width:9px;height:9px;border:1px solid #a39d90;border-radius:2px;background:linear-gradient(135deg,#fff 30%,#d8d4c8 100%);"></div>
<div class="b" style="left:47px;top:376px;width:5px;height:1px;background:#000;"></div>
<div class="b" style="left:49px;top:374px;width:1px;height:5px;background:#000;"></div>
<span id="tree23" class="t" style="left:81px;top:368.0px;height:16px;line-height:16px;font-size:12px;color:#000;font-weight:normal;transform:scaleX(0.9186);">Field 13</span>
<div class="b" style="left:54px;top:392px;width:6px;height:1px;background:repeating-linear-gradient(90deg,#b0aa9c 0 1px,transparent 1px 2px);"></div>
<svg style="left:60px;top:385px" width="16" height="14" viewBox="0 0 16 14"><path d="M0.5 12.5 V3 L2.5 0.8 H6.5 L8.5 2.5 H14.5 V12.5 Z" fill="url(#dith)" stroke="#808080"/><path d="M1 13.5 H15.5 V3.5" fill="none" stroke="#000"/><path d="M1.5 12 V3.4 L2.9 1.8 H6.1 L8.1 3.5 H13.5" fill="none" stroke="#fff" stroke-opacity="0.85"/></svg>
<div class="b" style="left:45px;top:388px;width:9px;height:9px;border:1px solid #a39d90;border-radius:2px;background:linear-gradient(135deg,#fff 30%,#d8d4c8 100%);"></div>
<div class="b" style="left:47px;top:392px;width:5px;height:1px;background:#000;"></div>
<div class="b" style="left:49px;top:390px;width:1px;height:5px;background:#000;"></div>
<span id="tree24" class="t" style="left:81px;top:384.0px;height:16px;line-height:16px;font-size:12px;color:#000;font-weight:normal;transform:scaleX(0.9186);">Field 14</span>
<div class="b" style="left:54px;top:408px;width:6px;height:1px;background:repeating-linear-gradient(90deg,#b0aa9c 0 1px,transparent 1px 2px);"></div>
<svg style="left:60px;top:401px" width="16" height="14" viewBox="0 0 16 14"><path d="M0.5 12.5 V3 L2.5 0.8 H6.5 L8.5 2.5 H14.5 V12.5 Z" fill="url(#dith)" stroke="#808080"/><path d="M1 13.5 H15.5 V3.5" fill="none" stroke="#000"/><path d="M1.5 12 V3.4 L2.9 1.8 H6.1 L8.1 3.5 H13.5" fill="none" stroke="#fff" stroke-opacity="0.85"/></svg>
<div class="b" style="left:45px;top:404px;width:9px;height:9px;border:1px solid #a39d90;border-radius:2px;background:linear-gradient(135deg,#fff 30%,#d8d4c8 100%);"></div>
<div class="b" style="left:47px;top:408px;width:5px;height:1px;background:#000;"></div>
<div class="b" style="left:49px;top:406px;width:1px;height:5px;background:#000;"></div>
<span id="tree25" class="t" style="left:81px;top:400.0px;height:16px;line-height:16px;font-size:12px;color:#000;font-weight:normal;transform:scaleX(0.9186);">Field 15</span>
<div class="b" style="left:30px;top:16px;width:1px;height:4px;background:repeating-linear-gradient(#b0aa9c 0 1px,transparent 1px 2px);"></div>
<div class="b" style="left:30px;top:29px;width:1px;height:55px;background:repeating-linear-gradient(#b0aa9c 0 1px,transparent 1px 2px);"></div>
<div class="b" style="left:30px;top:93px;width:1px;height:23px;background:repeating-linear-gradient(#b0aa9c 0 1px,transparent 1px 2px);"></div>
<div class="b" style="left:30px;top:125px;width:1px;height:7px;background:repeating-linear-gradient(#b0aa9c 0 1px,transparent 1px 2px);"></div>
<div class="b" style="left:30px;top:141px;width:1px;height:23px;background:repeating-linear-gradient(#b0aa9c 0 1px,transparent 1px 2px);"></div>
<div class="b" style="left:49px;top:32px;width:1px;height:41px;background:repeating-linear-gradient(#b0aa9c 0 1px,transparent 1px 2px);"></div>
<div class="b" style="left:49px;top:96px;width:1px;height:4px;background:repeating-linear-gradient(#b0aa9c 0 1px,transparent 1px 2px);"></div>
<div class="b" style="left:49px;top:176px;width:1px;height:4px;background:repeating-linear-gradient(#b0aa9c 0 1px,transparent 1px 2px);"></div>
<div class="b" style="left:49px;top:189px;width:1px;height:7px;background:repeating-linear-gradient(#b0aa9c 0 1px,transparent 1px 2px);"></div>
<div class="b" style="left:49px;top:205px;width:1px;height:7px;background:repeating-linear-gradient(#b0aa9c 0 1px,transparent 1px 2px);"></div>
<div class="b" style="left:49px;top:221px;width:1px;height:7px;background:repeating-linear-gradient(#b0aa9c 0 1px,transparent 1px 2px);"></div>
<div class="b" style="left:49px;top:237px;width:1px;height:7px;background:repeating-linear-gradient(#b0aa9c 0 1px,transparent 1px 2px);"></div>
<div class="b" style="left:49px;top:253px;width:1px;height:7px;background:repeating-linear-gradient(#b0aa9c 0 1px,transparent 1px 2px);"></div>
<div class="b" style="left:49px;top:269px;width:1px;height:7px;background:repeating-linear-gradient(#b0aa9c 0 1px,transparent 1px 2px);"></div>
<div class="b" style="left:49px;top:285px;width:1px;height:7px;background:repeating-linear-gradient(#b0aa9c 0 1px,transparent 1px 2px);"></div>
<div class="b" style="left:49px;top:301px;width:1px;height:7px;background:repeating-linear-gradient(#b0aa9c 0 1px,transparent 1px 2px);"></div>
<div class="b" style="left:49px;top:317px;width:1px;height:7px;background:repeating-linear-gradient(#b0aa9c 0 1px,transparent 1px 2px);"></div>
<div class="b" style="left:49px;top:333px;width:1px;height:7px;background:repeating-linear-gradient(#b0aa9c 0 1px,transparent 1px 2px);"></div>
<div class="b" style="left:49px;top:349px;width:1px;height:7px;background:repeating-linear-gradient(#b0aa9c 0 1px,transparent 1px 2px);"></div>
<div class="b" style="left:49px;top:365px;width:1px;height:7px;background:repeating-linear-gradient(#b0aa9c 0 1px,transparent 1px 2px);"></div>
<div class="b" style="left:49px;top:381px;width:1px;height:7px;background:repeating-linear-gradient(#b0aa9c 0 1px,transparent 1px 2px);"></div>
<div class="b" style="left:49px;top:397px;width:1px;height:7px;background:repeating-linear-gradient(#b0aa9c 0 1px,transparent 1px 2px);"></div>
<div class="b" style="left:49px;top:397px;width:1px;height:7px;background:repeating-linear-gradient(#b0aa9c 0 1px,transparent 1px 2px);"></div>
</div>
<div class="b" style="left:8px;top:485px;width:200px;height:30px;border:1px solid #a0a0a0;border-right:none;border-top:1px solid #a0a0a0;background:#f0f0f0;"></div>
<div class="b" style="left:9px;top:486px;width:199px;height:1px;background:#fff;"></div>
<svg style="left:141px;top:493px" width="14" height="13" viewBox="0 0 14 13">
<defs><linearGradient id="sky" x1="0" y1="0" x2="0" y2="1"><stop offset="0" stop-color="#b9d2f2"/><stop offset="1" stop-color="#f4f8fd"/></linearGradient></defs>
<rect x="0.5" y="0.5" width="13" height="12" fill="url(#sky)" stroke="#8a9cc4"/>
<rect x="1" y="8.6" width="12" height="3.4" fill="#e6c88c"/>
<circle cx="10.4" cy="4.4" r="1.7" fill="#f2c030"/>
<path d="M5.6 11.5 V3 M5.600 7.6 H3.300 V5 M5.6 8.600 H8 V5.600" stroke="#1e9a30" stroke-width="2" fill="none" stroke-linecap="round"/>
</svg>
<div class="b" style="left:161px;top:487px;width:22px;height:26px;background:#f8f8f8;"></div>
<svg style="left:166px;top:494px" width="16" height="14" viewBox="0 0 16 14">
<defs><linearGradient id="fg2" x1="0" y1="0" x2="0" y2="1"><stop offset="0" stop-color="#fff2b4"/><stop offset="1" stop-color="#e3ab34"/></linearGradient></defs>
<path d="M0.500 12.5 V1.5 Q0.5 0.8 1.2 0.8 H5 L6.5 2.300 H13.8 Q14.5 2.3 14.5 3 V12.5 Z" fill="#e9c466" stroke="#a88434"/>
<path d="M0.500 12.500 V4 H14.500 V12.500 Z" fill="url(#fg2)" stroke="#8a6a28" stroke-width="0.9"/>
</svg>
<svg style="left:190px;top:491px" width="12" height="18" viewBox="0 0 12 18">
<path d="M1.3 2 L3.9 4.500 L1.3 7 M5.700 2 L8.300 4.500 L5.700 7" fill="none" stroke="#000" stroke-width="1.6"/>
<polygon points="2.5,12 8.500,12 5.500,15.2" fill="#000"/></svg>
<div class="b" style="left:208px;top:30px;width:4px;height:486px;background:#f8f8f8;"></div>
<div class="b" style="left:212px;top:30px;width:532px;height:155px;background:#fff;"></div>
<div class="b" style="left:212px;top:30px;width:530px;height:3px;background:linear-gradient(#8e8e8e,#5e5e5e);"></div>
<div class="b" style="left:212px;top:30px;width:3px;height:155px;background:linear-gradient(90deg,#8e8e8e,#5e5e5e);"></div>
<div class="b" style="left:741px;top:32px;width:1px;height:152px;background:#777;"></div>
<div class="b" style="left:214px;top:184px;width:528px;height:1px;background:#6a6a6a;"></div>
<div class="b" style="left:215px;top:33px;width:510px;height:22px;background:linear-gradient(#fff 0%,#fff 40%,#f3f4f6 42%,#f1f2f4 100%);"></div>
<div class="b" style="left:215px;top:55px;width:510px;height:1px;background:#d5d5d5;"></div>
<div class="b" style="left:256px;top:33px;width:1px;height:22px;background:linear-gradient(#f2f2f2,#dedfe1);"></div>
<div class="b" style="left:356px;top:33px;width:1px;height:22px;background:linear-gradient(#f2f2f2,#dedfe1);"></div>
<div class="b" style="left:456px;top:33px;width:1px;height:22px;background:linear-gradient(#f2f2f2,#dedfe1);"></div>
<div class="b" style="left:556px;top:33px;width:1px;height:22px;background:linear-gradient(#f2f2f2,#dedfe1);"></div>
<span id="hdr0" class="t" style="left:221.3px;top:36.5px;height:16px;line-height:16px;font-size:12px;color:#000;font-weight:normal;transform:scaleX(1.0280);">Obj#</span>
<span id="hdr1" class="t" style="left:262.8px;top:36.5px;height:16px;line-height:16px;font-size:12px;color:#000;font-weight:normal;transform:scaleX(0.8651);">AREA.1</span>
<span id="hdr2" class="t" style="left:363.5px;top:36.5px;height:16px;line-height:16px;font-size:12px;color:#000;font-weight:normal;transform:scaleX(0.8644);">COFG_X.1</span>
<span id="hdr3" class="t" style="left:463.6px;top:36.5px;height:16px;line-height:16px;font-size:12px;color:#000;font-weight:normal;transform:scaleX(0.8759);">COFG_Y.1</span>
<div class="clip" style="left:215px;top:56px;width:510px;height:128px;">
<div class="b" style="left:4px;top:77px;width:338px;height:19px;background:#f0f0f0;"></div>
<span id="cell_0_0" class="t" style="left:6px;top:3.0px;height:16px;line-height:16px;font-size:12px;color:#000;font-weight:normal;transform:scaleX(0.8877);">1</span>
<span id="cell_0_1" class="t" style="left:47.69999999999999px;top:3.0px;height:16px;line-height:16px;font-size:12px;color:#000;font-weight:normal;transform:scaleX(0.8877);">5.000000</span>
<span id="cell_0_2" class="t" style="left:147.7px;top:3.0px;height:16px;line-height:16px;font-size:12px;color:#000;font-weight:normal;transform:scaleX(0.8877);">75.000000</span>
<span id="cell_0_3" class="t" style="left:247.7px;top:3.0px;height:16px;line-height:16px;font-size:12px;color:#000;font-weight:normal;transform:scaleX(0.8877);">0.000000</span>
<span id="cell_1_0" class="t" style="left:6px;top:22.0px;height:16px;line-height:16px;font-size:12px;color:#000;font-weight:normal;transform:scaleX(0.8877);">2</span>
<span id="cell_1_1" class="t" style="left:47.69999999999999px;top:22.0px;height:16px;line-height:16px;font-size:12px;color:#000;font-weight:normal;transform:scaleX(0.8877);">12.000000</span>
<span id="cell_1_2" class="t" style="left:147.7px;top:22.0px;height:16px;line-height:16px;font-size:12px;color:#000;font-weight:normal;transform:scaleX(0.8877);">97.000000</span>
<span id="cell_1_3" class="t" style="left:247.7px;top:22.0px;height:16px;line-height:16px;font-size:12px;color:#000;font-weight:normal;transform:scaleX(0.8877);">1.000000</span>
<span id="cell_2_0" class="t" style="left:6px;top:41.0px;height:16px;line-height:16px;font-size:12px;color:#000;font-weight:normal;transform:scaleX(0.8877);">3</span>
<span id="cell_2_1" class="t" style="left:47.69999999999999px;top:41.0px;height:16px;line-height:16px;font-size:12px;color:#000;font-weight:normal;transform:scaleX(0.8877);">18.000000</span>
<span id="cell_2_2" class="t" style="left:147.7px;top:41.0px;height:16px;line-height:16px;font-size:12px;color:#000;font-weight:normal;transform:scaleX(0.8877);">122.000000</span>
<span id="cell_2_3" class="t" style="left:247.7px;top:41.0px;height:16px;line-height:16px;font-size:12px;color:#000;font-weight:normal;transform:scaleX(0.8877);">3.000000</span>
<span id="cell_3_0" class="t" style="left:6px;top:60.0px;height:16px;line-height:16px;font-size:12px;color:#000;font-weight:normal;transform:scaleX(0.8877);">4</span>
<span id="cell_3_1" class="t" style="left:47.69999999999999px;top:60.0px;height:16px;line-height:16px;font-size:12px;color:#000;font-weight:normal;transform:scaleX(0.8877);">17.000000</span>
<span id="cell_3_2" class="t" style="left:147.7px;top:60.0px;height:16px;line-height:16px;font-size:12px;color:#000;font-weight:normal;transform:scaleX(0.8877);">291.000000</span>
<span id="cell_3_3" class="t" style="left:247.7px;top:60.0px;height:16px;line-height:16px;font-size:12px;color:#000;font-weight:normal;transform:scaleX(0.8877);">6.000000</span>
<span id="cell_4_0" class="t" style="left:6px;top:79.0px;height:16px;line-height:16px;font-size:12px;color:#000;font-weight:normal;transform:scaleX(0.8877);">5</span>
<span id="cell_4_1" class="t" style="left:47.69999999999999px;top:79.0px;height:16px;line-height:16px;font-size:12px;color:#000;font-weight:normal;transform:scaleX(0.8877);">4.000000</span>
<span id="cell_4_2" class="t" style="left:147.7px;top:79.0px;height:16px;line-height:16px;font-size:12px;color:#000;font-weight:normal;transform:scaleX(0.8877);">282.000000</span>
<span id="cell_4_3" class="t" style="left:247.7px;top:79.0px;height:16px;line-height:16px;font-size:12px;color:#000;font-weight:normal;transform:scaleX(0.8877);">7.000000</span>
<span id="cell_5_0" class="t" style="left:6px;top:98.0px;height:16px;line-height:16px;font-size:12px;color:#000;font-weight:normal;transform:scaleX(0.8877);">6</span>
<span id="cell_5_1" class="t" style="left:47.69999999999999px;top:98.0px;height:16px;line-height:16px;font-size:12px;color:#000;font-weight:normal;transform:scaleX(0.8877);">17.000000</span>
<span id="cell_5_2" class="t" style="left:147.7px;top:98.0px;height:16px;line-height:16px;font-size:12px;color:#000;font-weight:normal;transform:scaleX(0.8877);">195.000000</span>
<span id="cell_5_3" class="t" style="left:247.7px;top:98.0px;height:16px;line-height:16px;font-size:12px;color:#000;font-weight:normal;transform:scaleX(0.8877);">18.000000</span>
<span id="cell_6_0" class="t" style="left:6px;top:117.0px;height:16px;line-height:16px;font-size:12px;color:#000;font-weight:normal;transform:scaleX(0.8877);">7</span>
<span id="cell_6_1" class="t" style="left:47.69999999999999px;top:117.0px;height:16px;line-height:16px;font-size:12px;color:#000;font-weight:normal;transform:scaleX(0.8877);">17.000000</span>
<span id="cell_6_2" class="t" style="left:147.7px;top:117.0px;height:16px;line-height:16px;font-size:12px;color:#000;font-weight:normal;transform:scaleX(0.8877);">236.000000</span>
<span id="cell_6_3" class="t" style="left:247.7px;top:117.0px;height:16px;line-height:16px;font-size:12px;color:#000;font-weight:normal;transform:scaleX(0.8877);">23.000000</span>
</div>
<div class="b" style="left:725px;top:33px;width:16px;height:151px;background:#f0f0f0;"></div>
<svg style="left:0;top:0" width="752" height="542"><polygon points="729.5,44 733,40 736.5,44" fill="#3c3c3c"/></svg>
<svg style="left:0;top:0" width="752" height="542"><polygon points="729.5,173 733,177 736.5,173" fill="#3c3c3c"/></svg>
<div class="b" style="left:725px;top:51px;width:15px;height:15px;border:1px solid #8c8c8c;border-radius:2px;background:linear-gradient(90deg,#f6f6f6 0%,#ebebeb 45%,#d6d6d6 55%,#cbcbcb 100%);box-shadow:inset 0 0 0 1px rgba(255,255,255,.6);"></div>
<div class="b" style="left:212px;top:185px;width:532px;height:5px;background:#fbfbfb;"></div>
<div class="b" style="left:212px;top:190px;width:532px;height:275px;background:#f0f0f0;"></div>
<div class="b" style="left:212px;top:190px;width:531px;height:2px;background:linear-gradient(#9a9a9a,#646464);"></div>
<div class="b" style="left:212px;top:190px;width:2px;height:274px;background:linear-gradient(90deg,#9a9a9a,#646464);"></div>
<div class="b" style="left:742px;top:190px;width:2px;height:275px;background:#fff;"></div>
<div class="b" style="left:212px;top:464px;width:532px;height:1px;background:#fff;"></div>
<div class="b" style="left:725px;top:192px;width:17px;height:255px;background:#f0f0f0;"></div>
<svg style="left:0;top:0" width="752" height="542"><polygon points="730.5,203 734,199 737.5,203" fill="#3c3c3c"/></svg>
<svg style="left:0;top:0" width="752" height="542"><polygon points="730.5,437 734,441 737.5,437" fill="#3c3c3c"/></svg>
<div class="b" style="left:726px;top:210px;width:15px;height:113px;border:1px solid #8c8c8c;border-radius:2px;background:linear-gradient(90deg,#f6f6f6 0%,#ebebeb 45%,#d6d6d6 55%,#cbcbcb 100%);box-shadow:inset 0 0 0 1px rgba(255,255,255,.6);"></div>
<div class="b" style="left:730px;top:262px;width:7px;height:1px;background:#4f4f4f;"></div>
<div class="b" style="left:730px;top:263px;width:7px;height:1px;background:rgba(255,255,255,.75);"></div>
<div class="b" style="left:730px;top:265px;width:7px;height:1px;background:#4f4f4f;"></div>
<div class="b" style="left:730px;top:266px;width:7px;height:1px;background:rgba(255,255,255,.75);"></div>
<div class="b" style="left:730px;top:268px;width:7px;height:1px;background:#4f4f4f;"></div>
<div class="b" style="left:730px;top:269px;width:7px;height:1px;background:rgba(255,255,255,.75);"></div>
<div class="b" style="left:214px;top:447px;width:511px;height:17px;background:#f0f0f0;"></div>
<svg style="left:0;top:0" width="752" height="542"><polygon points="224,452.0 220,455.5 224,459.0" fill="#3c3c3c"/></svg>
<svg style="left:0;top:0" width="752" height="542"><polygon points="714.5,452.0 718.5,455.5 714.5,459.0" fill="#3c3c3c"/></svg>
<div class="b" style="left:232px;top:448px;width:397px;height:15px;border:1px solid #8c8c8c;border-radius:2px;background:linear-gradient(#f6f6f6 0%,#ebebeb 45%,#d6d6d6 55%,#cbcbcb 100%);box-shadow:inset 0 0 0 1px rgba(255,255,255,.6);"></div>
<div class="b" style="left:426px;top:452px;width:1px;height:7px;background:#4f4f4f;"></div>
<div class="b" style="left:427px;top:452px;width:1px;height:7px;background:rgba(255,255,255,.75);"></div>
<div class="b" style="left:429px;top:452px;width:1px;height:7px;background:#4f4f4f;"></div>
<div class="b" style="left:430px;top:452px;width:1px;height:7px;background:rgba(255,255,255,.75);"></div>
<div class="b" style="left:432px;top:452px;width:1px;height:7px;background:#4f4f4f;"></div>
<div class="b" style="left:433px;top:452px;width:1px;height:7px;background:rgba(255,255,255,.75);"></div>
<svg style="left:214px;top:192px" width="511" height="255" viewBox="214 192 511 255">
<defs>
<radialGradient id="sb"><stop offset="0" stop-color="#fff" stop-opacity="1"/><stop offset="0.28" stop-color="#fff" stop-opacity="1"/><stop offset="0.38" stop-color="#fff" stop-opacity="0.7"/><stop offset="0.5" stop-color="#fff" stop-opacity="0.32"/><stop offset="0.65" stop-color="#fff" stop-opacity="0.12"/><stop offset="0.85" stop-color="#fff" stop-opacity="0.04"/><stop offset="1" stop-color="#fff" stop-opacity="0"/></radialGradient>
<radialGradient id="sd"><stop offset="0" stop-color="#fff" stop-opacity="1"/><stop offset="0.4" stop-color="#fff" stop-opacity="0.65"/><stop offset="1" stop-color="#fff" stop-opacity="0"/></radialGradient>
<radialGradient id="bgl" cx="0.3" cy="0.3" r="0.95"><stop offset="0" stop-color="#3c3c3c"/><stop offset="0.45" stop-color="#373737"/><stop offset="1" stop-color="#2b2b2b"/></radialGradient>
<filter id="nz" x="0" y="0" width="100%" height="100%"><feTurbulence type="fractalNoise" baseFrequency="0.35 0.6" numOctaves="2" seed="7" result="t"/><feColorMatrix type="matrix" values="0 0 0 0 1  0 0 0 0 1  0 0 0 0 1  0.9 0 0 0 -0.38"/></filter>
<clipPath id="imclip"><rect x="214" y="192" width="511" height="255"/></clipPath>
</defs>
<rect x="214" y="192" width="511" height="255" fill="url(#bgl)"/>
<rect x="214" y="192" width="511" height="255" filter="url(#nz)" opacity="0.22"/>
<g clip-path="url(#imclip)">
<ellipse cx="277" cy="250.7" rx="14" ry="14" fill="url(#sd)" opacity="0.42"/>
<ellipse cx="337.4" cy="264.0" rx="16.8" ry="16.8" fill="url(#sd)" opacity="0.2"/>
<ellipse cx="337.4" cy="264.0" rx="10.4" ry="10.4" fill="url(#sb)" opacity="1"/>
<ellipse cx="368.4" cy="193.2" rx="14.7" ry="14.7" fill="url(#sd)" opacity="0.2"/>
<ellipse cx="368.4" cy="193.2" rx="9.1" ry="9.1" fill="url(#sb)" opacity="0.8"/>
<ellipse cx="415.2" cy="193.6" rx="23.1" ry="21.0" fill="url(#sd)" opacity="0.2"/>
<ellipse cx="415.2" cy="193.6" rx="14.3" ry="13.0" fill="url(#sb)" opacity="1"/>
<ellipse cx="442.4" cy="210.7" rx="11" ry="11" fill="url(#sd)" opacity="0.25"/>
<ellipse cx="469" cy="200" rx="16.8" ry="16.8" fill="url(#sd)" opacity="0.2"/>
<ellipse cx="469" cy="200" rx="10.4" ry="10.4" fill="url(#sb)" opacity="1"/>
<ellipse cx="578.9" cy="271.1" rx="18.9" ry="18.9" fill="url(#sd)" opacity="0.2"/>
<ellipse cx="578.9" cy="271.1" rx="11.7" ry="11.7" fill="url(#sb)" opacity="1"/>
<ellipse cx="585.7" cy="234.6" rx="18" ry="18" fill="url(#sd)" opacity="0.14"/>
<ellipse cx="617.1" cy="231.5" rx="21.0" ry="21.0" fill="url(#sd)" opacity="0.2"/>
<ellipse cx="617.1" cy="231.5" rx="13.0" ry="13.0" fill="url(#sb)" opacity="1"/>
<ellipse cx="701" cy="241.4" rx="16.8" ry="16.8" fill="url(#sd)" opacity="0.2"/>
<ellipse cx="701" cy="241.4" rx="10.4" ry="10.4" fill="url(#sb)" opacity="1"/>
<ellipse cx="258.3" cy="328.1" rx="25.2" ry="25.2" fill="url(#sd)" opacity="0.2"/>
<ellipse cx="258.3" cy="328.1" rx="15.6" ry="15.6" fill="url(#sb)" opacity="1"/>
<ellipse cx="278.7" cy="334" rx="16.8" ry="16.8" fill="url(#sd)" opacity="0.2"/>
<ellipse cx="278.7" cy="334" rx="10.4" ry="10.4" fill="url(#sb)" opacity="1"/>
<ellipse cx="372.6" cy="297.4" rx="16.8" ry="16.8" fill="url(#sd)" opacity="0.2"/>
<ellipse cx="372.6" cy="297.4" rx="10.4" ry="10.4" fill="url(#sb)" opacity="1"/>
<ellipse cx="436.5" cy="304.2" rx="16.8" ry="16.8" fill="url(#sd)" opacity="0.2"/>
<ellipse cx="436.5" cy="304.2" rx="10.4" ry="10.4" fill="url(#sb)" opacity="1"/>
<ellipse cx="454.3" cy="296.6" rx="16.8" ry="16.8" fill="url(#sd)" opacity="0.2"/>
<ellipse cx="454.3" cy="296.6" rx="10.4" ry="10.4" fill="url(#sb)" opacity="1"/>
<ellipse cx="531.6" cy="297.8" rx="21.0" ry="21.0" fill="url(#sd)" opacity="0.2"/>
<ellipse cx="531.6" cy="297.8" rx="13.0" ry="13.0" fill="url(#sb)" opacity="1"/>
<ellipse cx="655" cy="344.2" rx="21.0" ry="21.0" fill="url(#sd)" opacity="0.2"/>
<ellipse cx="655" cy="344.2" rx="13.0" ry="13.0" fill="url(#sb)" opacity="1"/>
<ellipse cx="594" cy="347" rx="12" ry="12" fill="url(#sd)" opacity="0.1"/>
<ellipse cx="217.4" cy="379.9" rx="16.8" ry="16.8" fill="url(#sd)" opacity="0.2"/>
<ellipse cx="217.4" cy="379.9" rx="10.4" ry="10.4" fill="url(#sb)" opacity="1"/>
<ellipse cx="265.9" cy="384.1" rx="16.8" ry="16.8" fill="url(#sd)" opacity="0.2"/>
<ellipse cx="265.9" cy="384.1" rx="10.4" ry="10.4" fill="url(#sb)" opacity="1"/>
<ellipse cx="248" cy="401.1" rx="16.8" ry="16.8" fill="url(#sd)" opacity="0.2"/>
<ellipse cx="248" cy="401.1" rx="10.4" ry="10.4" fill="url(#sb)" opacity="1"/>
<ellipse cx="383.7" cy="366.3" rx="16.8" ry="16.8" fill="url(#sd)" opacity="0.2"/>
<ellipse cx="383.7" cy="366.3" rx="10.4" ry="10.4" fill="url(#sb)" opacity="1"/>
<ellipse cx="383.7" cy="409.7" rx="18.9" ry="18.9" fill="url(#sd)" opacity="0.2"/>
<ellipse cx="383.7" cy="409.7" rx="11.7" ry="11.7" fill="url(#sb)" opacity="1"/>
<ellipse cx="404.1" cy="417.3" rx="14.7" ry="14.7" fill="url(#sd)" opacity="0.2"/>
<ellipse cx="404.1" cy="417.3" rx="9.1" ry="9.1" fill="url(#sb)" opacity="1"/>
<ellipse cx="468" cy="442" rx="8" ry="8" fill="url(#sd)" opacity="0.15"/>
<ellipse cx="562.8" cy="383.7" rx="31.5" ry="21.0" fill="url(#sd)" opacity="0.2"/>
<ellipse cx="562.8" cy="383.7" rx="19.5" ry="13.0" fill="url(#sb)" opacity="1"/>
<ellipse cx="476" cy="443.7" rx="16.8" ry="16.8" fill="url(#sd)" opacity="0.2"/>
<ellipse cx="476" cy="443.7" rx="10.4" ry="10.4" fill="url(#sb)" opacity="1"/>
<ellipse cx="608.6" cy="383.8" rx="18.9" ry="18.9" fill="url(#sd)" opacity="0.2"/>
<ellipse cx="608.6" cy="383.8" rx="11.7" ry="11.7" fill="url(#sb)" opacity="1"/>
<ellipse cx="658.9" cy="390.6" rx="18.9" ry="18.9" fill="url(#sd)" opacity="0.2"/>
<ellipse cx="658.9" cy="390.6" rx="11.7" ry="11.7" fill="url(#sb)" opacity="1"/>
<g shape-rendering="crispEdges">
<polyline points="222.5,192.5 223.5,196.5 228.5,203.5 226.5,220.5 228.5,222.5 224.5,226.5 226.5,230.5 227.5,240.5 242.5,257.5 247.5,257.5 248.5,261.5 253.5,266.5 259.5,272.5 260.5,277.5 260.5,282.5 259.5,284.5 261.5,288.5 265.5,289.5 267.5,299.5 265.5,300.5 272.5,302.5" fill="none" stroke="#00ff00" stroke-width="0.95"/>
<polyline points="214.5,218.5 216.5,218.5" fill="none" stroke="#00ff00" stroke-width="0.95"/>
<polyline points="214.5,219.5 214.5,238.5 218.5,241.5 216.5,243.5 216.5,251.5 220.5,260.5 224.5,268.5 226.5,271.5 223.5,277.5 222.5,277.5 223.5,284.5 225.5,289.5 222.5,293.5 226.5,294.5 234.5,304.5 248.5,304.5 252.5,310.5 272.5,302.5" fill="none" stroke="#00ff00" stroke-width="0.95"/>
<polyline points="268.5,240.5 267.5,249.5" fill="none" stroke="#00ff00" stroke-width="0.95"/>
<polyline points="332.5,193.5 336.5,194.5 338.5,192.5 342.5,193.5" fill="none" stroke="#00ff00" stroke-width="0.95"/>
<polyline points="334.5,237.5 339.5,239.5 335.5,241.5 341.5,242.5 336.5,245.5 340.5,246.5 338.5,249.5 342.5,250.5" fill="none" stroke="#00ff00" stroke-width="0.95"/>
<polyline points="342.5,192.5 382.5,192.5" fill="none" stroke="#00ff00" stroke-width="0.95"/>
<polyline points="353.5,192.5 365.5,222.5" fill="none" stroke="#00ff00" stroke-width="0.95"/>
<polyline points="358.5,192.5 366.5,203.5 369.5,209.5 367.5,212.5 365.5,207.5 369.5,209.5 368.5,224.5 373.5,227.5 378.5,230.5 378.5,234.5 382.5,232.5 380.5,226.5 383.5,230.5 391.5,227.5" fill="none" stroke="#00ff00" stroke-width="0.95"/>
<polyline points="365.5,222.5 359.5,225.5 355.5,228.5 356.5,232.5 350.5,236.5 343.5,238.5 342.5,243.5 350.5,243.5 353.5,240.5 354.5,243.5 352.5,243.5 349.5,244.5 350.5,248.5 347.5,250.5 342.5,251.5" fill="none" stroke="#00ff00" stroke-width="0.95"/>
<polyline points="347.5,250.5 347.5,257.5" fill="none" stroke="#00ff00" stroke-width="0.95"/>
<polyline points="342.5,238.5 343.5,238.5" fill="none" stroke="#00ff00" stroke-width="0.95"/>
<polyline points="369.5,193.5 373.5,199.5 391.5,227.5 393.5,232.5 398.5,241.5 393.5,246.5 396.5,250.5 392.5,255.5 396.5,257.5 396.5,266.5 404.5,267.5 406.5,277.5 407.5,283.5 410.5,286.5 422.5,287.5 423.5,288.5 418.5,293.5 421.5,297.5 416.5,299.5 422.5,300.5 418.5,302.5 423.5,304.5 427.5,301.5 430.5,300.5 431.5,294.5 428.5,291.5 431.5,288.5" fill="none" stroke="#00ff00" stroke-width="0.95"/>
<polyline points="391.5,227.5 398.5,218.5 401.5,218.5 413.5,223.5 421.5,228.5 423.5,234.5 430.5,235.5 436.5,231.5 431.5,224.5 435.5,220.5 436.5,212.5 439.5,204.5 439.5,200.5 433.5,198.5 430.5,198.5 426.5,202.5 422.5,200.5 418.5,198.5 410.5,197.5 403.5,196.5 402.5,192.5" fill="none" stroke="#00ff00" stroke-width="0.95"/>
<polyline points="431.5,224.5 440.5,232.5 443.5,241.5 440.5,244.5 441.5,249.5 449.5,256.5 454.5,266.5 459.5,277.5 457.5,282.5 456.5,292.5 449.5,293.5 450.5,294.5 455.5,294.5 456.5,299.5 461.5,298.5 466.5,299.5 465.5,300.5 461.5,300.5 470.5,305.5 473.5,309.5 478.5,314.5 477.5,326.5 476.5,333.5 481.5,334.5 485.5,338.5 487.5,342.5 490.5,343.5 484.5,347.5 492.5,349.5 491.5,353.5 488.5,360.5" fill="none" stroke="#00ff00" stroke-width="0.95"/>
<polyline points="457.5,192.5 457.5,196.5 464.5,198.5 463.5,200.5 470.5,199.5 474.5,204.5 482.5,213.5 486.5,219.5 486.5,238.5 484.5,241.5 490.5,243.5 492.5,249.5 493.5,260.5 500.5,266.5 503.5,277.5 509.5,280.5 510.5,286.5 515.5,291.5 513.5,302.5 521.5,299.5 521.5,292.5 526.5,294.5 535.5,280.5 533.5,285.5 537.5,283.5 535.5,288.5 538.5,284.5 537.5,289.5 544.5,289.5 545.5,295.5 549.5,296.5" fill="none" stroke="#00ff00" stroke-width="0.95"/>
<polyline points="562.5,271.5 565.5,269.5 573.5,269.5 576.5,266.5 578.5,271.5 582.5,273.5 582.5,268.5 591.5,260.5 596.5,265.5 596.5,270.5 593.5,271.5 598.5,272.5 598.5,278.5 600.5,282.5 603.5,290.5 610.5,304.5 613.5,304.5 617.5,311.5 621.5,326.5 626.5,331.5 628.5,331.5 626.5,334.5 630.5,340.5 634.5,352.5 631.5,357.5 630.5,362.5 628.5,368.5 630.5,376.5 623.5,377.5 636.5,389.5 644.5,400.5 647.5,401.5 641.5,395.5 638.5,396.5 634.5,384.5 632.5,384.5 636.5,383.5" fill="none" stroke="#00ff00" stroke-width="0.95"/>
<polyline points="478.5,277.5 483.5,274.5" fill="none" stroke="#00ff00" stroke-width="0.95"/>
<polyline points="605.5,214.5 605.5,218.5 613.5,228.5 617.5,224.5 621.5,228.5 623.5,226.5 626.5,230.5 628.5,228.5 629.5,233.5 633.5,238.5 638.5,239.5 643.5,246.5 644.5,256.5 646.5,257.5 647.5,265.5 654.5,277.5 654.5,282.5 656.5,283.5 654.5,288.5 657.5,297.5 664.5,307.5 664.5,314.5 671.5,310.5 672.5,313.5 679.5,319.5 677.5,326.5 679.5,331.5 679.5,337.5 689.5,345.5 692.5,345.5 712.5,337.5 712.5,333.5 718.5,331.5 720.5,345.5 724.5,345.5" fill="none" stroke="#00ff00" stroke-width="0.95"/>
<polyline points="689.5,235.5 689.5,239.5" fill="none" stroke="#00ff00" stroke-width="0.95"/>
<polyline points="689.5,237.5 694.5,238.5 697.5,238.5 699.5,233.5 701.5,236.5 699.5,237.5 703.5,238.5 703.5,241.5 714.5,241.5 712.5,235.5 713.5,238.5 716.5,237.5 717.5,243.5 718.5,250.5 724.5,255.5" fill="none" stroke="#00ff00" stroke-width="0.95"/>
<polyline points="715.5,203.5 718.5,203.5 719.5,206.5 722.5,204.5 723.5,199.5 724.5,196.5" fill="none" stroke="#00ff00" stroke-width="0.95"/>
<polyline points="273.5,302.5 275.5,290.5 277.5,288.5 282.5,286.5 288.5,288.5 288.5,284.5 293.5,284.5 294.5,286.5 297.5,288.5 301.5,291.5" fill="none" stroke="#00ff00" stroke-width="0.95"/>
<polyline points="273.5,302.5 279.5,297.5 282.5,296.5 281.5,300.5 283.5,297.5 285.5,300.5 288.5,296.5 291.5,296.5 290.5,299.5 288.5,300.5" fill="none" stroke="#00ff00" stroke-width="0.95"/>
<polyline points="281.5,300.5 282.5,303.5 282.5,308.5 284.5,310.5 287.5,308.5" fill="none" stroke="#00ff00" stroke-width="0.95"/>
<polyline points="237.5,312.5 246.5,312.5 250.5,317.5 254.5,322.5 255.5,326.5 260.5,327.5 265.5,323.5 268.5,323.5 271.5,326.5 273.5,327.5 273.5,333.5 276.5,328.5 280.5,329.5 285.5,331.5 288.5,328.5 292.5,328.5 293.5,331.5 289.5,333.5 292.5,335.5 295.5,333.5 301.5,333.5 305.5,335.5 307.5,333.5 311.5,333.5 312.5,336.5 317.5,340.5 320.5,348.5 324.5,356.5 316.5,358.5 319.5,362.5 320.5,362.5 328.5,368.5 333.5,378.5 338.5,381.5 337.5,387.5 342.5,389.5" fill="none" stroke="#00ff00" stroke-width="0.95"/>
<polyline points="338.5,381.5 342.5,380.5" fill="none" stroke="#00ff00" stroke-width="0.95"/>
<polyline points="295.5,333.5 299.5,340.5 302.5,348.5 306.5,350.5 305.5,355.5 308.5,362.5 307.5,362.5 311.5,369.5 316.5,371.5 326.5,384.5 331.5,391.5 334.5,401.5 332.5,407.5 340.5,413.5 342.5,416.5 342.5,424.5 345.5,430.5 348.5,436.5 348.5,442.5 354.5,443.5 358.5,447.5" fill="none" stroke="#00ff00" stroke-width="0.95"/>
<polyline points="361.5,288.5 364.5,295.5 371.5,294.5 378.5,294.5 385.5,303.5 392.5,304.5 400.5,310.5 406.5,314.5 408.5,318.5 412.5,317.5 412.5,334.5 416.5,339.5 422.5,341.5 427.5,348.5 432.5,357.5 431.5,362.5 432.5,362.5 435.5,368.5 440.5,373.5 445.5,373.5 447.5,368.5 452.5,379.5 453.5,389.5 449.5,388.5 450.5,394.5 447.5,394.5 453.5,393.5 452.5,389.5 461.5,388.5 464.5,386.5 470.5,385.5 470.5,384.5 474.5,380.5 475.5,387.5 481.5,398.5 485.5,396.5" fill="none" stroke="#00ff00" stroke-width="0.95"/>
<polyline points="430.5,300.5 434.5,304.5 436.5,300.5 439.5,305.5 440.5,302.5 443.5,303.5 442.5,309.5 439.5,310.5" fill="none" stroke="#00ff00" stroke-width="0.95"/>
<polyline points="423.5,304.5 426.5,307.5 423.5,310.5 430.5,311.5 433.5,313.5 429.5,314.5 430.5,306.5" fill="none" stroke="#00ff00" stroke-width="0.95"/>
<polyline points="443.5,306.5 448.5,311.5 449.5,313.5 452.5,315.5 460.5,323.5 462.5,329.5 470.5,331.5" fill="none" stroke="#00ff00" stroke-width="0.95"/>
<polyline points="470.5,278.5 463.5,279.5 462.5,287.5 461.5,298.5" fill="none" stroke="#00ff00" stroke-width="0.95"/>
<polyline points="470.5,278.5 481.5,278.5 483.5,281.5 485.5,288.5 489.5,291.5" fill="none" stroke="#00ff00" stroke-width="0.95"/>
<polyline points="375.5,349.5 375.5,355.5 381.5,360.5 384.5,362.5 381.5,363.5 387.5,362.5 391.5,366.5 397.5,367.5 399.5,371.5 403.5,368.5 402.5,372.5 409.5,373.5 416.5,378.5 416.5,382.5 411.5,385.5 410.5,389.5 412.5,392.5 410.5,395.5 416.5,404.5 417.5,410.5 421.5,414.5 422.5,422.5 416.5,425.5 412.5,420.5 410.5,413.5 401.5,412.5 400.5,418.5 398.5,416.5 400.5,421.5 404.5,423.5 407.5,431.5 412.5,436.5 416.5,447.5" fill="none" stroke="#00ff00" stroke-width="0.95"/>
<polyline points="535.5,288.5 534.5,293.5 538.5,295.5 539.5,300.5 535.5,304.5 537.5,317.5 543.5,320.5 542.5,329.5 545.5,345.5 550.5,342.5 553.5,344.5 556.5,349.5 564.5,349.5 567.5,352.5 570.5,362.5 573.5,368.5 578.5,373.5 580.5,374.5 579.5,402.5 582.5,411.5 586.5,413.5 588.5,425.5 595.5,430.5 596.5,438.5 598.5,440.5" fill="none" stroke="#00ff00" stroke-width="0.95"/>
<polyline points="476.5,333.5 470.5,338.5 471.5,342.5 477.5,346.5 484.5,347.5 480.5,356.5 488.5,360.5 490.5,362.5 489.5,367.5 498.5,372.5 494.5,366.5 490.5,362.5" fill="none" stroke="#00ff00" stroke-width="0.95"/>
<polyline points="648.5,337.5 650.5,334.5 654.5,339.5 648.5,339.5 654.5,340.5 657.5,340.5 664.5,345.5 669.5,345.5 670.5,343.5 673.5,343.5 675.5,346.5 681.5,347.5 684.5,350.5 681.5,351.5 679.5,357.5 683.5,362.5 685.5,365.5 685.5,379.5 681.5,384.5 682.5,396.5 679.5,404.5 685.5,412.5 688.5,425.5 695.5,433.5 694.5,443.5 691.5,447.5" fill="none" stroke="#00ff00" stroke-width="0.95"/>
<polyline points="214.5,378.5 220.5,377.5 224.5,373.5 225.5,366.5 232.5,368.5 237.5,368.5 236.5,372.5 238.5,373.5 239.5,382.5 248.5,388.5 253.5,392.5 255.5,398.5 257.5,402.5 255.5,408.5 259.5,418.5 263.5,421.5 257.5,429.5 260.5,438.5 263.5,447.5" fill="none" stroke="#00ff00" stroke-width="0.95"/>
<polyline points="214.5,393.5 226.5,392.5 227.5,387.5 230.5,386.5 231.5,391.5 238.5,390.5 237.5,398.5 241.5,401.5 243.5,398.5 245.5,403.5 248.5,407.5 243.5,411.5 240.5,415.5 245.5,413.5 247.5,420.5 254.5,423.5 257.5,430.5 258.5,438.5 260.5,447.5" fill="none" stroke="#00ff00" stroke-width="0.95"/>
<polyline points="214.5,378.5 214.5,381.5" fill="none" stroke="#00ff00" stroke-width="0.95"/>
<polyline points="214.5,386.5 214.5,402.5" fill="none" stroke="#00ff00" stroke-width="0.95"/>
<polyline points="246.5,368.5 250.5,370.5 254.5,378.5 262.5,379.5 263.5,382.5 261.5,376.5 264.5,374.5 270.5,374.5 273.5,376.5 279.5,373.5 282.5,367.5 288.5,366.5 288.5,370.5 289.5,379.5 291.5,384.5 289.5,386.5 292.5,390.5 294.5,396.5 298.5,402.5 297.5,404.5 299.5,412.5 306.5,414.5 312.5,423.5 316.5,430.5 317.5,435.5 317.5,441.5 320.5,447.5" fill="none" stroke="#00ff00" stroke-width="0.95"/>
<polyline points="312.5,423.5 336.5,422.5 332.5,429.5 336.5,431.5 336.5,447.5" fill="none" stroke="#00ff00" stroke-width="0.95"/>
<polyline points="422.5,422.5 427.5,421.5 431.5,427.5 434.5,435.5 442.5,442.5 444.5,447.5" fill="none" stroke="#00ff00" stroke-width="0.95"/>
<polyline points="421.5,422.5 422.5,430.5 427.5,438.5 430.5,447.5" fill="none" stroke="#00ff00" stroke-width="0.95"/>
<polyline points="367.5,396.5 367.5,400.5 376.5,405.5 382.5,407.5 387.5,405.5 391.5,411.5 394.5,407.5 393.5,402.5 396.5,399.5 394.5,406.5 397.5,411.5 386.5,411.5 393.5,413.5" fill="none" stroke="#00ff00" stroke-width="0.95"/>
<polyline points="377.5,441.5 381.5,440.5 383.5,444.5 385.5,447.5" fill="none" stroke="#00ff00" stroke-width="0.95"/>
<polyline points="468.5,426.5 468.5,435.5 470.5,438.5" fill="none" stroke="#00ff00" stroke-width="0.95"/>
<polyline points="498.5,372.5 501.5,382.5 504.5,390.5 506.5,401.5 510.5,400.5 512.5,408.5 518.5,407.5 527.5,405.5 528.5,402.5 534.5,402.5 536.5,405.5 537.5,395.5 540.5,388.5 544.5,391.5 544.5,396.5 552.5,398.5 558.5,402.5 555.5,403.5 556.5,408.5 561.5,406.5" fill="none" stroke="#00ff00" stroke-width="0.95"/>
<polyline points="552.5,398.5 561.5,392.5 567.5,392.5 572.5,396.5 576.5,395.5 577.5,401.5 582.5,404.5 592.5,406.5 598.5,407.5 598.5,408.5 603.5,406.5" fill="none" stroke="#00ff00" stroke-width="0.95"/>
<polyline points="546.5,370.5 554.5,373.5 561.5,379.5 567.5,378.5 572.5,379.5 578.5,379.5 581.5,387.5 585.5,394.5 589.5,391.5 592.5,392.5 594.5,389.5 598.5,390.5 598.5,390.5 601.5,394.5" fill="none" stroke="#00ff00" stroke-width="0.95"/>
<polyline points="577.5,380.5 578.5,396.5" fill="none" stroke="#00ff00" stroke-width="0.95"/>
<polyline points="470.5,439.5 475.5,442.5 481.5,445.5 487.5,444.5 489.5,447.5" fill="none" stroke="#00ff00" stroke-width="0.95"/>
<polyline points="611.5,367.5 615.5,370.5 603.5,384.5 606.5,376.5 601.5,374.5" fill="none" stroke="#00ff00" stroke-width="0.95"/>
<polyline points="615.5,370.5 619.5,374.5 617.5,387.5 621.5,395.5 604.5,396.5 603.5,406.5 601.5,413.5 609.5,421.5 605.5,426.5 606.5,430.5 614.5,436.5 615.5,441.5 621.5,447.5" fill="none" stroke="#00ff00" stroke-width="0.95"/>
<polyline points="619.5,374.5 630.5,376.5" fill="none" stroke="#00ff00" stroke-width="0.95"/>
<polyline points="621.5,395.5 621.5,404.5 623.5,413.5 626.5,416.5 623.5,425.5 632.5,436.5 630.5,447.5" fill="none" stroke="#00ff00" stroke-width="0.95"/>
<polyline points="623.5,395.5 628.5,393.5 628.5,384.5 634.5,384.5" fill="none" stroke="#00ff00" stroke-width="0.95"/>
<polyline points="639.5,384.5 644.5,389.5 649.5,389.5 648.5,394.5 649.5,387.5 652.5,384.5 656.5,389.5 659.5,394.5 655.5,391.5 661.5,396.5 667.5,407.5 668.5,421.5 672.5,432.5 671.5,436.5 672.5,447.5" fill="none" stroke="#00ff00" stroke-width="0.95"/>
<polyline points="663.5,390.5 665.5,385.5 672.5,380.5 683.5,379.5 685.5,383.5 688.5,384.5" fill="none" stroke="#00ff00" stroke-width="0.95"/>
<polyline points="343.5,265.5 343.5,269.5 341.5,271.5 343.5,270.5 346.5,269.5 349.5,272.5 352.5,277.5 353.5,277.5 356.5,285.5 358.5,281.5 360.5,288.5 367.5,295.5 368.5,302.5 373.5,310.5 380.5,313.5 382.5,320.5 388.5,321.5 393.5,327.5 393.5,336.5 398.5,343.5 405.5,346.5 407.5,357.5 409.5,362.5 410.5,362.5 411.5,368.5 409.5,373.5" fill="none" stroke="#ff0000" stroke-width="1"/>
<polyline points="332.5,257.5 332.5,261.5 339.5,261.5 343.5,265.5 343.5,267.5" fill="none" stroke="#ff0000" stroke-width="1"/>
<polyline points="422.5,342.5 424.5,345.5 430.5,343.5 428.5,348.5 426.5,351.5 422.5,349.5 421.5,353.5 425.5,351.5 430.5,356.5" fill="none" stroke="#ff0000" stroke-width="1"/>
<polyline points="421.5,353.5 413.5,362.5 410.5,365.5" fill="none" stroke="#ff0000" stroke-width="1"/>
<polyline points="340.5,441.5 342.5,441.5" fill="none" stroke="#ff0000" stroke-width="1"/>
<polyline points="406.5,447.5 407.5,444.5 408.5,447.5" fill="none" stroke="#ff0000" stroke-width="1"/>
<polyline points="410.5,362.5 411.5,368.5 409.5,373.5" fill="none" stroke="#ff0000" stroke-width="2"/>
<path d="M317.8 257.5 H324.6 M324.5 251.2 V257.5" stroke="#ff00ff" stroke-width="1" fill="none"/>
<path d="M266.5 302.5 H280.5 M273.5 295.5 V309.5" stroke="#f00" stroke-width="1" fill="none"/>
<path d="M358.5 222.5 H372.5 M365.5 215.5 V229.5" stroke="#f00" stroke-width="1" fill="none"/>
<path d="M426.5 356.5 H440.5 M433.5 349.5 V363.5" stroke="#0000ff" stroke-width="1" fill="none"/>
<path d="M469.5 333.5 H483.5 M476.5 326.5 V340.5" stroke="#f00" stroke-width="1" fill="none"/>
<path d="M478.5 347.5 H492.5 M485.5 340.5 V354.5" stroke="#f00" stroke-width="1" fill="none"/>
<path d="M481.5 360.5 H495.5 M488.5 353.5 V367.5" stroke="#f00" stroke-width="1" fill="none"/>
<path d="M213.5 394.5 H227.5 M220.5 387.5 V401.5" stroke="#f00" stroke-width="1" fill="none"/>
<path d="M223.5 392.5 H237.5 M230.5 385.5 V399.5" stroke="#f00" stroke-width="1" fill="none"/>
<path d="M231.5 390.5 H245.5 M238.5 383.5 V397.5" stroke="#f00" stroke-width="1" fill="none"/>
<path d="M305.5 423.5 H319.5 M312.5 416.5 V430.5" stroke="#f00" stroke-width="1" fill="none"/>
<path d="M327.5 401.5 H341.5 M334.5 394.5 V408.5" stroke="#f00" stroke-width="1" fill="none"/>
<path d="M341.5 442.5 H355.5 M348.5 435.5 V449.5" stroke="#f00" stroke-width="1" fill="none"/>
<path d="M491.5 372.5 H505.5 M498.5 365.5 V379.5" stroke="#f00" stroke-width="1" fill="none"/>
<path d="M520.5 403.5 H534.5 M527.5 396.5 V410.5" stroke="#f00" stroke-width="1" fill="none"/>
<path d="M537.5 396.5 H551.5 M544.5 389.5 V403.5" stroke="#f00" stroke-width="1" fill="none"/>
<path d="M545.5 399.5 H559.5 M552.5 392.5 V406.5" stroke="#f00" stroke-width="1" fill="none"/>
<path d="M547.5 374.5 H561.5 M554.5 367.5 V381.5" stroke="#f00" stroke-width="1" fill="none"/>
<path d="M547.5 376.5 H561.5 M554.5 369.5 V383.5" stroke="#f00" stroke-width="1" fill="none"/>
<path d="M553.5 382.5 H567.5 M560.5 375.5 V389.5" stroke="#f00" stroke-width="1" fill="none"/>
<path d="M571.5 380.5 H585.5 M578.5 373.5 V387.5" stroke="#f00" stroke-width="1" fill="none"/>
</g>
<rect x="324" y="257" width="8.3" height="16" fill="#fff"/>
<text x="325" y="270" textLength="6.4" lengthAdjust="spacingAndGlyphs" font-family="Liberation Sans,sans-serif" font-weight="bold" font-size="14" fill="#000">8</text>
</g></svg>
<div class="b" style="left:222px;top:477px;width:324px;height:3px;background:#e7eaea;border:1px solid #b4b8b8;border-bottom-color:#fcfcfc;border-right-color:#e0e0e0;"></div>
<svg style="left:246px;top:469px" width="11" height="17" viewBox="0 0 11 17"><defs><linearGradient id="slg" x1="0" y1="0" x2="1" y2="0"><stop offset="0" stop-color="#fbfbfb"/><stop offset="1" stop-color="#cfcfcf"/></linearGradient></defs><path d="M1.5 5 L5.2 1.6 L8.9 5 V13.3 Q8.9 14.5 7.7 14.5 H2.7 Q1.5 14.5 1.5 13.3 Z" fill="url(#slg)" stroke="#9a9a9a" stroke-width="1"/></svg>
<span id="allframes" class="t" style="left:562px;top:470.8px;height:15px;line-height:15px;font-size:11px;color:#000;font-weight:normal;transform:scaleX(0.9375);">All Frames, 0 Delay</span>
<div class="b" style="left:212px;top:489px;width:532px;height:1px;background:#a0a0a0;"></div>
<div class="b" style="left:212px;top:490px;width:532px;height:1px;background:#fff;"></div>
<div class="b" style="left:212px;top:489px;width:1px;height:4px;background:#a0a0a0;"></div>
<div class="b" style="left:8px;top:514px;width:736px;height:1px;background:#a0a0a0;"></div>
<div class="b" style="left:8px;top:515px;width:736px;height:1px;background:#fbfbfb;"></div>
<div class="b" style="left:268px;top:492px;width:1px;height:21px;background:#a0a0a0;"></div>
<div class="b" style="left:269px;top:492px;width:1px;height:21px;background:#fff;"></div>
<div class="b" style="left:320px;top:492px;width:1px;height:21px;background:#a0a0a0;"></div>
<div class="b" style="left:321px;top:492px;width:1px;height:21px;background:#fff;"></div>
<div class="b" style="left:416px;top:492px;width:1px;height:21px;background:#a0a0a0;"></div>
<div class="b" style="left:417px;top:492px;width:1px;height:21px;background:#fff;"></div>
<div class="b" style="left:618px;top:492px;width:1px;height:21px;background:#a0a0a0;"></div>
<div class="b" style="left:619px;top:492px;width:1px;height:21px;background:#fff;"></div>
<svg style="left:0;top:0" width="752" height="542"><polygon points="229,495 229,508 236,501.5" fill="#000"/></svg>
<div class="b" style="left:224px;top:509px;width:16px;height:1px;background:#fafafa;"></div>
<svg style="left:0;top:0" width="752" height="542"><path d="M248.6 500.6 A6 6 0 0 1 259.2 498.6" fill="none" stroke="#000" stroke-width="1.7"/><polygon points="256.2,497.4 262.2,497 260.8,502.6" fill="#000"/><path d="M260.4 503.4 A6 6 0 0 1 249.8 505.4" fill="none" stroke="#000" stroke-width="1.7"/><polygon points="252.8,506.6 246.800,507 248.2,501.4" fill="#000"/></svg>
<div class="b" style="left:246px;top:509px;width:16px;height:1px;background:#fafafa;"></div>
<svg style="left:0;top:0" width="752" height="542"><path d="M280 501.5 H288 M284 497.5 V505.5" stroke="#a8a8a8" stroke-width="2"/></svg>
<div class="b" style="left:276px;top:509px;width:16px;height:1px;background:#fafafa;"></div>
<svg style="left:0;top:0" width="752" height="542"><path d="M302 501.5 H309" stroke="#000" stroke-width="2"/></svg>
<div class="b" style="left:298px;top:509px;width:16px;height:1px;background:#fafafa;"></div>
<svg style="left:0;top:0" width="752" height="542"><rect x="330" y="496" width="2" height="11" fill="#000"/><polygon points="339,496 339,507 332,501.5" fill="#000"/><polygon points="341,496.5 341,506.5 336,501.5" fill="none" stroke="#000" stroke-width="1"/></svg>
<div class="b" style="left:328px;top:509px;width:16px;height:1px;background:#fafafa;"></div>
<svg style="left:0;top:0" width="752" height="542"><polygon points="359,496 359,507 353,501.5" fill="#000"/><polygon points="363.5,496.5 363.5,506.5 358,501.5" fill="none" stroke="#000" stroke-width="1"/><rect x="362" y="496" width="2" height="11" fill="#000"/></svg>
<div class="b" style="left:350px;top:509px;width:16px;height:1px;background:#fafafa;"></div>
<svg style="left:0;top:0" width="752" height="542"><polygon points="379,496 379,507 385,501.5" fill="#000"/><polygon points="374.5,496.5 374.5,506.5 380,501.5" fill="none" stroke="#000" stroke-width="1"/><rect x="374" y="496" width="2" height="11" fill="#000"/></svg>
<div class="b" style="left:372px;top:509px;width:16px;height:1px;background:#fafafa;"></div>
<svg style="left:0;top:0" width="752" height="542"><rect x="406" y="496" width="2" height="11" fill="#000"/><polygon points="399,496 399,507 406,501.5" fill="#000"/><polygon points="396.500,496.5 396.5,506.5 401.5,501.5" fill="none" stroke="#000" stroke-width="1"/></svg>
<div class="b" style="left:394px;top:509px;width:16px;height:1px;background:#fafafa;"></div>
<svg style="left:0;top:0" width="752" height="542"><polygon points="426,496.5 426,506.5 432,501.5" fill="#000"/><polygon points="438,496.5 438,506.5 432,501.5" fill="#000"/></svg>
<div class="b" style="left:424px;top:509px;width:16px;height:1px;background:#fafafa;"></div>
<div class="b" style="left:446px;top:493px;width:143px;height:17px;background:#fff;"></div>
<div class="b" style="left:577px;top:493px;width:12px;height:17px;background:#f4f4f4;"></div>
<span id="fieldno" class="t" style="left:450px;top:493.8px;height:15px;line-height:15px;font-size:11px;color:#000;font-weight:normal;transform:scaleX(1.0238);">Field#: 6</span>
<svg style="left:0;top:0" width="752" height="542"><polygon points="580,500 587,500 583.5,503.5" fill="#000"/></svg>
<svg style="left:596px;top:493px" width="18" height="17" viewBox="0 0 18 17">
<path d="M0.5 1.5 H4 L5 2.5 H9.5 V8.5 H0.5 Z" fill="#f0e040" stroke="#807000" stroke-width="0.8"/>
<path d="M2 3.5 H5 M2 5 H4" stroke="#a06000" stroke-width="0.8"/>
<rect x="5" y="8" width="4" height="8" fill="#000"/><rect x="12" y="8" width="4" height="8" fill="#000"/>
<rect x="6" y="5" width="3" height="4" fill="#000"/><rect x="12" y="5" width="3" height="4" fill="#000"/>
<rect x="9" y="9" width="3" height="3" fill="#000"/>
<rect x="6" y="12" width="1.5" height="2" fill="#ddd"/><rect x="13" y="12" width="1.5" height="2" fill="#ddd"/>
</svg>
<div class="b" style="left:623px;top:491px;width:22px;height:22px;background:#fbfbfb;border:1px solid #a0a0a0;border-right-color:#fff;border-bottom-color:#fff;"></div>
<svg style="left:627px;top:495px" width="17" height="15" viewBox="0 0 17 15">
<path d="M0.5 13.5 V3 L2.5 0.8 H7 L9 2.8 H15.5 V13.5 Z" fill="url(#dith)" stroke="#808080"/>
<path d="M1 14.5 H16.5 V3.8" fill="none" stroke="#000"/></svg>
<div class="b" style="left:649px;top:495px;width:13px;height:13px;background:#fff;border:2px solid #000;"></div>
<svg style="left:0;top:0" width="752" height="542"><path d="M652.2 501.3 L654.6 504.2 L659 498.3" fill="none" stroke="#000" stroke-width="2"/></svg>
<div class="b" style="left:670px;top:494px;width:15px;height:15px;background:#fff;border:1px solid #000;"></div>
<div class="b" style="left:672px;top:496px;width:11px;height:11px;background:#fff;border:1px solid #000;"></div>
<svg style="left:0;top:0" width="752" height="542"><path d="M674.2 501.3 L676.6 504.2 L681 498.3" fill="none" stroke="#000" stroke-width="2"/></svg>
<div class="b" style="left:12px;top:517px;width:170px;height:17px;border-top:1px solid #a0a0a0;border-left:1px solid #a0a0a0;border-right:1px solid #fff;border-bottom:1px solid #fff;"></div>
<div class="b" style="left:185px;top:517px;width:97px;height:17px;border-top:1px solid #a0a0a0;border-left:1px solid #a0a0a0;border-right:1px solid #fff;border-bottom:1px solid #fff;"></div>
<div class="b" style="left:285px;top:517px;width:80px;height:17px;border-top:1px solid #a0a0a0;border-left:1px solid #a0a0a0;border-right:1px solid #fff;border-bottom:1px solid #fff;"></div>
<div class="b" style="left:368px;top:517px;width:133px;height:17px;border-top:1px solid #a0a0a0;border-left:1px solid #a0a0a0;border-right:1px solid #fff;border-bottom:1px solid #fff;"></div>
<div class="b" style="left:504px;top:517px;width:89px;height:17px;border-top:1px solid #a0a0a0;border-left:1px solid #a0a0a0;border-right:1px solid #fff;border-bottom:1px solid #fff;"></div>
<div class="b" style="left:596px;top:517px;width:131px;height:17px;border-top:1px solid #a0a0a0;border-left:1px solid #a0a0a0;border-right:1px solid #fff;border-bottom:1px solid #fff;"></div>
<span id="zoom" class="t" style="left:506.5px;top:517.8px;height:15px;line-height:15px;font-size:11px;color:#8c8c8c;font-weight:normal;transform:scaleX(0.9500);">Zoom (205 %)</span>
<span id="sf" class="t" style="left:598.3px;top:517.8px;height:15px;line-height:15px;font-size:11px;color:#000;font-weight:normal;transform:scaleX(0.9775);">SF: 1.000Px  Default</span>
<svg style="left:0;top:0" width="752" height="542"><path d="M732 533.5 L743.5 522 M736 533.5 L743.5 526 M740 533.5 L743.5 530" stroke="#9a9a9a" stroke-width="1.2"/></svg>
</div></body></html>
